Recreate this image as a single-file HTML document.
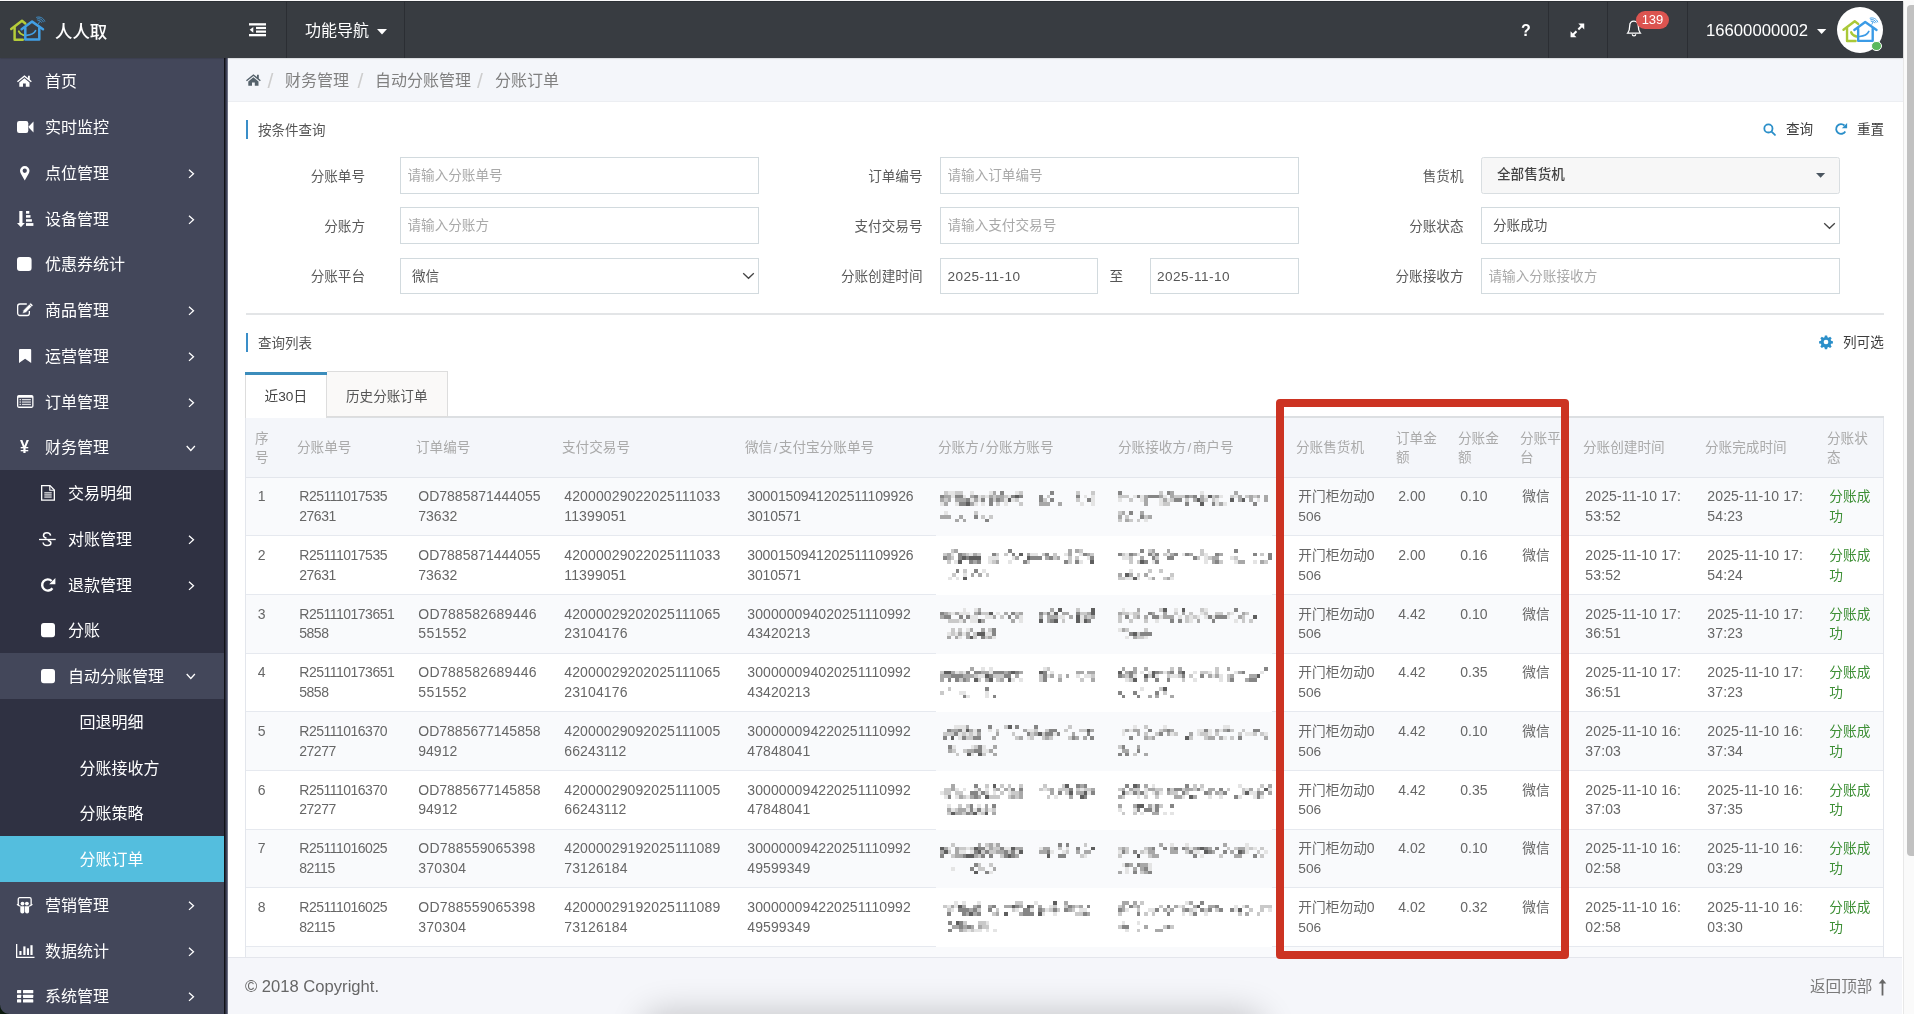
<!DOCTYPE html>
<html lang="zh-CN">
<head>
<meta charset="utf-8">
<title>分账订单</title>
<style>
*{box-sizing:border-box;margin:0;padding:0}
html,body{width:1914px;height:1014px;overflow:hidden;background:#fff}
body{position:relative;font-family:"Liberation Sans","Noto Sans CJK SC",sans-serif;font-size:13.5px;color:#555;-webkit-font-smoothing:antialiased;filter:opacity(1)}
.abs{position:absolute}
svg{display:block;position:absolute;overflow:visible}
/* top line */
#topline{left:0;top:0;width:1914px;height:1px;background:#fbfbfb;z-index:4}
/* header */
#hdr{left:0;top:1px;width:1902.500px;height:57px;background:#383c41;color:#fff;z-index:3;box-shadow:inset 0 1px 0 #2c3035,0 0.500px 1.500px rgba(0,0,0,.28)}
#hdr .sep{position:absolute;top:0;width:1px;height:57px;background:#2b2e33}
#hdr .t{position:absolute;white-space:nowrap;color:#fff}
/* sidebar */
#side{left:0;top:58px;width:228px;height:956px;background:#43475a}
#side .edge{position:absolute;left:224px;top:0;width:4px;height:956px;background:linear-gradient(90deg,#111217 0 1px,#2b2d3b 1px 2px,#3e4257 2px 3px,#6b6f82 3px 4px)}
#side .it{position:absolute;left:0;width:224px;height:45.75px;line-height:45.75px;color:#fff;font-size:16px;white-space:nowrap}
#side .it span{position:absolute;left:45px;top:1.300px}
#side .it.s2 span{left:68px}
#side .it.s3 span{left:79.500px}
#side .dark{background:#2f3142}
#side .act{background:#54bede}
/* main */
#crumb{left:228px;top:58px;width:1674.500px;height:44px;background:#f4f6fa;border-bottom:1px solid #eceef2;z-index:2}
#crumb .t{position:absolute;top:1.300px;line-height:44px;font-size:16px;color:#808080;white-space:nowrap}
#crumb .sl{position:absolute;top:.5px;line-height:44px;font-size:21px;color:#cdcdcd}
#foot{left:228px;top:957px;width:1674px;height:57px;background:#f5f6fa;border-top:1px solid #e4e6ec;overflow:hidden}
/* scrollbar */
#sbar{left:1903px;top:0;width:11px;height:1014px;background:#fafafa;border-left:1px solid #e8e8e8}
#sthumb{left:1907px;top:4.500px;width:7px;height:851px;background:#c1c1c1;border-radius:4px 0 0 4px}
</style>
</head>
<body>
<div id="topline" class="abs"></div>

<!-- HEADER -->
<div id="hdr" class="abs">
  <svg style="left:4px;top:10.100px" width="50" height="38" viewBox="0 0 50 38" fill="none" stroke-linecap="round" stroke-linejoin="round">
    <g stroke="#b5cc3a" stroke-width="2.500"><path d="M7.200 18 18 9.800 21.300 12.400"/><path d="M10.600 16.500V28.800H18.800"/><path stroke-width="1.900" d="M14.800 20.300c.8 2 2.400 3.200 4.600 3.900"/></g>
    <g stroke="#42a0e6" stroke-width="2.500"><path d="M17.600 18.200 28.100 10.600 39 18.200"/><path d="M21.300 17V28.600H35.300V17"/><path stroke-width="1.700" d="M22.600 24.300c4 -.2 7.500-1.600 9-4.600"/></g>
    <g stroke="#3f97d8" stroke-width=".9"><path d="M34.500 12.800 35.400 10.900"/><path d="M33.900 9.600c1.500-.4 3 .4 3.600 1.700"/><path d="M33.200 7.900c2.500-.8 5.100.5 6.100 2.900"/><path d="M32.600 6.300c3.400-1.100 6.900.7 8.200 3.900"/></g>
  </svg>
  <svg style="left:249px;top:22px" width="17" height="14" viewBox="0 0 17 14" fill="#fff"><rect x="0" y="0.200" width="17" height="2.300"/><rect x="7" y="3.900" width="10" height="2.200"/><rect x="7" y="7.500" width="10" height="2.200"/><rect x="0" y="11" width="17" height="2.300"/><path d="M4.300 3.900v5.800L0.700 6.800z"/></svg>
  <svg style="left:376.500px;top:27.800px" width="10" height="6" viewBox="0 0 10 6" fill="#fff"><path d="M0 0h10L5 5.400z"/></svg>
  <svg style="left:1570.400px;top:21.700px" width="14.800" height="14.800" viewBox="0 0 16 16" fill="#fff"><path d="M9 .6h6.400V7L13 4.600 9.800 7.800 8.200 6.200 11.400 3z"/><path d="M7 15.400H.6V9L3 11.400 6.200 8.200 7.800 9.800 4.600 13z"/></svg>
  <svg style="left:1626px;top:19px" width="16" height="18" viewBox="0 0 16 18" fill="none" stroke="#fff" stroke-width="1.300"><path d="M8 1.200c-2.700 0-4.300 2.200-4.300 4.900 0 3.500-.8 5.600-2 7h12.600c-1.200-1.400-2-3.500-2-7 0-2.700-1.600-4.900-4.300-4.900z"/><path d="M6.300 14.200a1.700 1.700 0 0 0 3.400 0"/></svg>
  <div class="abs" style="left:1636px;top:10px;width:33px;height:18.300px;border-radius:9.200px;background:#db5450;color:#fff;font-size:13px;line-height:18px;text-align:center;font-weight:normal">139</div>
  <svg style="left:1816.800px;top:28px" width="9.300" height="5.600" viewBox="0 0 10 6" fill="#fff"><path d="M0 0h10L5 5.400z"/></svg>
  <div class="abs" style="left:1837.300px;top:5.500px;width:46.200px;height:46.200px;border-radius:50%;background:#fff"></div>
  <svg style="left:1835.800px;top:9.600px" width="52" height="39.500" viewBox="0 0 50 38" fill="none" stroke-linecap="round" stroke-linejoin="round">
    <g stroke="#a9c838" stroke-width="2.300"><path d="M7.200 18 18 9.800 21.300 12.400"/><path d="M10.600 16.500V28.900H18.800"/><path d="M14.600 20.500c.8 2.200 2.600 3.400 5 4"/></g>
    <g stroke="#3b9be6" stroke-width="2.300"><path d="M17.600 18.200 28.100 10.600 39 18.200"/><path d="M21.300 17V28.700H35.300V17"/><path stroke-width="1.600" d="M22.600 24.500c4 -.2 7.500-1.600 9-4.800"/></g>
    <g stroke="#3b9be6" stroke-width=".9"><path d="M34.500 12.800 35.400 10.900"/><path d="M33.900 9.900c1.400-.4 2.700.3 3.300 1.500"/><path d="M33.300 8.400c2.200-.7 4.400.4 5.300 2.500"/><path d="M32.800 6.900c3-1 6.200.6 7.300 3.600"/></g>
  </svg>
  <div class="abs" style="left:1871.100px;top:39.600px;width:10.800px;height:10.800px;border-radius:50%;background:#5cb85c;border:1.800px solid #fff"></div>

  <div class="t" style="left:55px;top:19px;font-size:17.400px;line-height:24px;font-weight:500">人人取</div>
  <div class="sep" style="left:286px"></div>
  <div class="t" style="left:305px;top:18px;font-size:16px;line-height:24px">功能导航</div>
  <div class="sep" style="left:404px"></div>
  <div class="t" style="left:1521px;top:17.800px;font-size:16px;line-height:24px;font-weight:bold">?</div>
  <div class="sep" style="left:1548px"></div>
  <div class="sep" style="left:1607px"></div>
  <div class="sep" style="left:1687px"></div>
  <div class="t" style="left:1706px;top:17.700px;font-size:16.700px;line-height:24px">16600000002</div>
</div>

<!-- SIDEBAR -->
<div id="side" class="abs">
  <div class="it s1 " style="top:0.0px"><svg style="left:17.3px;top:17.2px" width="15" height="12" viewBox="0 0 15 12" fill="#fff"><path d="M7.400 .2 0 6.200.9 7.300 7.400 2l6.500 5.300.900-1.100-2-1.650V.8h-1.800v2.250z"/><path d="M7.400 3.300 2.300 7.500v4.200H6V8.600h2.800v3.100h3.700V7.500z"/></svg><span>首页</span></div>
  <div class="it s1 " style="top:45.75px"><svg style="left:16.7px;top:17.25px" width="16.5" height="12" viewBox="0 0 16.5 12" fill="#fff"><rect x="0" y="0" width="11.300" height="12" rx="2.200"/><path d="M11.900 5.200 16.500.6v10.800L11.900 6.800z"/></svg><span>实时监控</span></div>
  <div class="it s1 " style="top:91.5px"><svg style="left:20px;top:16.3px" width="9.5" height="14.4" viewBox="0 0 9.5 14.4" fill="#fff"><path fill-rule="evenodd" d="M4.750 0A4.750 4.750 0 0 0 0 4.750c0 1.100.400 2.100.900 3.100l3.850 6.550L8.600 7.850c.5-1 .900-2 .900-3.100A4.750 4.750 0 0 0 4.750 0zm0 6.900a2.150 2.150 0 1 1 0-4.300 2.150 2.150 0 0 1 0 4.300z"/></svg><span>点位管理</span><svg style="left:187.500px;top:19.300px" width="7" height="9.600" viewBox="0 0 7 9.600" fill="none" stroke="#fff" stroke-width="1.300"><path d="M1 .7 5.500 4.800 1 8.900"/></svg></div>
  <div class="it s1 " style="top:137.25px"><svg style="left:16.9px;top:15.75px" width="16.5" height="16.5" viewBox="0 0 16.5 16.5" fill="#fff"><rect x="2.300" y="0" width="3.200" height="12.300"/><path d="M0 12h7.800L3.900 16.300z"/><rect x="9" y="0" width="3.300" height="2.700"/><rect x="9" y="4.100" width="4.500" height="2.600"/><rect x="9" y="8.200" width="5.900" height="2.500"/><rect x="9" y="12.100" width="7.400" height="2.800"/></svg><span>设备管理</span><svg style="left:187.500px;top:19.300px" width="7" height="9.600" viewBox="0 0 7 9.600" fill="none" stroke="#fff" stroke-width="1.300"><path d="M1 .7 5.500 4.800 1 8.900"/></svg></div>
  <div class="it s1 " style="top:183.0px"><svg style="left:17.4px;top:16.4px" width="14.6" height="13.9" viewBox="0 0 14.6 13.9" fill="#fff"><rect x="0" y="0" width="14.600" height="13.900" rx="2.900"/></svg><span>优惠券统计</span></div>
  <div class="it s1 " style="top:228.75px"><svg style="left:16.7px;top:16px" width="16.5" height="13.5" viewBox="0 0 16.5 13.5" fill="#fff"><path fill="none" stroke="#fff" stroke-width="1.300" d="M12.350 8V10.300a2.200 2.200 0 0 1-2.200 2.200H2.850a2.200 2.200 0 0 1-2.200-2.200V3.200A2.200 2.200 0 0 1 2.850 1H9.800"/><path stroke="#43475a" stroke-width=".7" d="M6.300 7.200 13.700-.2l2.500 2.500-7.400 7.400-3.400 .900z"/><path stroke="#43475a" stroke-width=".6" fill="none" d="M12.300 1.200l2.500 2.500"/></svg><span>商品管理</span><svg style="left:187.500px;top:19.300px" width="7" height="9.600" viewBox="0 0 7 9.600" fill="none" stroke="#fff" stroke-width="1.300"><path d="M1 .7 5.500 4.800 1 8.900"/></svg></div>
  <div class="it s1 " style="top:274.5px"><svg style="left:18.9px;top:16.2px" width="12.2" height="14.1" viewBox="0 0 12.2 14.1" fill="#fff"><path d="M1 0h10.200a1 1 0 0 1 1 1v13.100L6.100 9.800 0 14.100V1a1 1 0 0 1 1-1z"/></svg><span>运营管理</span><svg style="left:187.500px;top:19.300px" width="7" height="9.600" viewBox="0 0 7 9.600" fill="none" stroke="#fff" stroke-width="1.300"><path d="M1 .7 5.500 4.800 1 8.900"/></svg></div>
  <div class="it s1 " style="top:320.25px"><svg style="left:16.7px;top:16.4px" width="16.5" height="12.9" viewBox="0 0 16.5 12.9" fill="#fff"><path fill-rule="evenodd" d="M1.800 0h12.900a1.800 1.800 0 0 1 1.800 1.800v9.300a1.800 1.800 0 0 1-1.800 1.800H1.800A1.800 1.800 0 0 1 0 11.100V1.800A1.800 1.800 0 0 1 1.800 0zM1.300 2.700v8.900h13.900V2.700z"/><rect x="2.600" y="4" width="1.200" height="1.300"/><rect x="2.600" y="6.400" width="1.200" height="1.300"/><rect x="2.600" y="8.800" width="1.200" height="1.300"/><rect x="4.900" y="4" width="9" height="1.300" opacity=".8"/><rect x="4.900" y="6.400" width="9" height="1.300" opacity=".8"/><rect x="4.900" y="8.800" width="9" height="1.300" opacity=".8"/></svg><span>订单管理</span><svg style="left:187.500px;top:19.300px" width="7" height="9.600" viewBox="0 0 7 9.600" fill="none" stroke="#fff" stroke-width="1.300"><path d="M1 .7 5.500 4.800 1 8.900"/></svg></div>
  <div class="it s1 " style="top:366.0px"><em style="position:absolute;left:20.100px;top:1.200px;font-style:normal;font-size:17.500px;font-weight:bold;transform:scaleX(.92);transform-origin:0 50%">¥</em><span>财务管理</span><svg style="left:186.300px;top:20.500px" width="9.600" height="7" viewBox="0 0 9.600 7" fill="none" stroke="#fff" stroke-width="1.300"><path d="M.7 1 4.800 5.500 8.900 1"/></svg></div>
  <div class="it s2 dark" style="top:411.75px"><svg style="left:40.9px;top:15.3px" width="14" height="15.7" viewBox="0 0 14 15.7" fill="#fff"><path fill="none" stroke="#fff" stroke-width="1.300" d="M.65.65H9l4.350 4.350v10.050H.65z"/><path fill="none" stroke="#fff" stroke-width="1.100" d="M8.800.8v4.400h4.400"/><rect x="3.300" y="7.300" width="7.400" height="1.100"/><rect x="3.300" y="9.400" width="7.400" height="1.100"/><rect x="3.300" y="11.500" width="7.400" height="1.100"/></svg><span>交易明细</span></div>
  <div class="it s2 dark" style="top:457.5px"><svg style="left:39.3px;top:16.6px" width="16.7" height="13.6" viewBox="0 0 16.7 13.6" fill="#fff"><rect x="0" y="6.850" width="16.700" height="1.300"/><path fill="none" stroke="#fff" stroke-width="1.500" d="M11.600 3.600C11.300 1.600 9.900.7 8 .7 6 .7 4.500 1.700 4.500 3.400c0 1.500 1.200 2.300 3 2.900M8.800 8.300c1.900.6 3.100 1.400 3.100 2.700 0 1.700-1.600 2.500-3.700 2.500-2.300 0-3.900-1.100-4.100-3"/></svg><span>对账管理</span><svg style="left:187.500px;top:19.300px" width="7" height="9.600" viewBox="0 0 7 9.600" fill="none" stroke="#fff" stroke-width="1.300"><path d="M1 .7 5.500 4.800 1 8.900"/></svg></div>
  <div class="it s2 dark" style="top:503.25px"><svg style="left:40.9px;top:16.5px" width="14.4" height="13.9" viewBox="0 0 14.4 13.9" fill="#fff"><path fill="none" stroke="#fff" stroke-width="2.400" d="M11.390 10.210A5.600 5.600 0 1 1 10.700 3"/><path d="M14.400 0v6.200H8.200z"/></svg><span>退款管理</span><svg style="left:187.500px;top:19.300px" width="7" height="9.600" viewBox="0 0 7 9.600" fill="none" stroke="#fff" stroke-width="1.300"><path d="M1 .7 5.500 4.800 1 8.900"/></svg></div>
  <div class="it s2 dark" style="top:549.0px"><svg style="left:40.9px;top:16.3px" width="14" height="14.2" viewBox="0 0 14 14.2" fill="#fff"><rect x="0" y="0" width="14" height="14.200" rx="2.900"/></svg><span>分账</span></div>
  <div class="it s2 " style="top:594.75px"><svg style="left:40.9px;top:16.3px" width="14" height="14.2" viewBox="0 0 14 14.2" fill="#fff"><rect x="0" y="0" width="14" height="14.200" rx="2.900"/></svg><span>自动分账管理</span><svg style="left:186.300px;top:20.500px" width="9.600" height="7" viewBox="0 0 9.600 7" fill="none" stroke="#fff" stroke-width="1.300"><path d="M.7 1 4.800 5.500 8.900 1"/></svg></div>
  <div class="it s3 dark" style="top:640.5px"><span>回退明细</span></div>
  <div class="it s3 dark" style="top:686.25px"><span>分账接收方</span></div>
  <div class="it s3 dark" style="top:732.0px"><span>分账策略</span></div>
  <div class="it s3 act" style="top:777.75px"><span>分账订单</span></div>
  <div class="it s1 " style="top:823.5px"><svg style="left:17.1px;top:15.2px" width="15.4" height="16.5" viewBox="0 0 15.4 16.5" fill="#fff"><path fill="none" stroke="#fff" stroke-width="1.300" d="M1.250 8V2.200a1.500 1.500 0 0 1 1.500-1.500h9.900a1.500 1.500 0 0 1 1.500 1.500V8"/><path fill="none" stroke="#fff" stroke-width="1.200" d="M0 7.300c1 .9 2.200 1.600 3.500 2M15.400 7.300c-1 .9-2.200 1.600-3.500 2"/><circle cx="5.500" cy="6.600" r="1.900"/><circle cx="9.900" cy="6.600" r="1.900"/><path d="M3.300 9.200h4.100v5.200a2.050 2.050 0 0 1-4.100 0zM8 9.200h4.100v5.200a2.050 2.050 0 0 1-4.100 0z"/></svg><span>营销管理</span><svg style="left:187.500px;top:19.300px" width="7" height="9.600" viewBox="0 0 7 9.600" fill="none" stroke="#fff" stroke-width="1.300"><path d="M1 .7 5.500 4.800 1 8.900"/></svg></div>
  <div class="it s1 " style="top:869.25px"><svg style="left:15.5px;top:16.75px" width="19" height="14" viewBox="0 0 19 14" fill="#fff"><path fill="none" stroke="#fff" stroke-width="1.300" d="M.65 0v13.350H18.500"/><rect x="3.400" y="7" width="2.100" height="4"/><rect x="7.300" y="2.400" width="2.200" height="8.600"/><rect x="10.900" y="4.300" width="2.100" height="6.700"/><rect x="14.400" y="1.200" width="2.200" height="9.800"/></svg><span>数据统计</span><svg style="left:187.500px;top:19.300px" width="7" height="9.600" viewBox="0 0 7 9.600" fill="none" stroke="#fff" stroke-width="1.300"><path d="M1 .7 5.500 4.800 1 8.900"/></svg></div>
  <div class="it s1 " style="top:915.0px"><svg style="left:16.8px;top:16.6px" width="16.3" height="12.6" viewBox="0 0 16.3 12.6" fill="#fff"><rect x="0" y="0" width="4.200" height="3.300" rx=".6"/><rect x="0" y="4.650" width="4.200" height="3.300" rx=".6"/><rect x="0" y="9.300" width="4.200" height="3.300" rx=".6"/><rect x="6" y="0" width="10.300" height="3.300" rx=".6"/><rect x="6" y="4.650" width="10.300" height="3.300" rx=".6"/><rect x="6" y="9.300" width="10.300" height="3.300" rx=".6"/></svg><span>系统管理</span><svg style="left:187.500px;top:19.300px" width="7" height="9.600" viewBox="0 0 7 9.600" fill="none" stroke="#fff" stroke-width="1.300"><path d="M1 .7 5.500 4.800 1 8.900"/></svg></div>
  <div class="edge"></div>
</div>

<!-- BREADCRUMB -->
<div id="crumb" class="abs">
  <svg style="left:18px;top:16px" width="15" height="12" viewBox="0 0 15 12" fill="#55626b"><path d="M7.400 .2 0 6.200.9 7.300 7.400 2l6.500 5.300.900-1.100-2-1.650V.8h-1.800v2.250z"/><path d="M7.400 3.300 2.300 7.500v4.200H6V8.600h2.800v3.100h3.700V7.500z"/></svg>
  <div class="sl" style="left:39.600px">/</div>
  <div class="t" style="left:57px">财务管理</div>
  <div class="sl" style="left:129.600px">/</div>
  <div class="t" style="left:147px">自动分账管理</div>
  <div class="sl" style="left:249.100px">/</div>
  <div class="t" style="left:267px">分账订单</div>
</div>

<!-- CONTENT -->
<div id="main" class="abs" style="left:228px;top:101px;width:1674px;height:856px;background:#fff;overflow:hidden">
<style>
.bar{position:absolute;left:17.600px;width:2.800px;height:18.500px;background:#3a8ec8}
.stitle{position:absolute;left:30px;font-size:13.500px;line-height:18px;color:#555;white-space:nowrap}
.lbl{position:absolute;width:150px;text-align:right;font-size:13.600px;line-height:37px;color:#5a5a5a;white-space:nowrap}
.inp{position:absolute;height:36.600px;border:1px solid #d2dade;background:#fff;font-size:13.600px;line-height:34px;padding-top:1.300px;color:#555;padding-left:6.500px;white-space:nowrap;overflow:hidden}
.inp.ph{color:#a9a9a9}
.inp.sel{padding-left:11px}
.lnk{position:absolute;font-size:13.600px;line-height:18px;color:#3c3c3c;white-space:nowrap}
</style>
<div class="bar" style="top:19px"></div><div class="stitle" style="top:20.500px">按条件查询</div>
<svg style="left:1534.500px;top:21.500px" width="13.300" height="13.300" viewBox="0 0 14 14" fill="none" stroke="#2b8fc9" stroke-width="1.900" stroke-linecap="round"><circle cx="5.700" cy="5.700" r="4.300"/><path d="M9 9l3.600 3.600"/></svg>
<div class="lnk" style="left:1558px;top:20.300px">查询</div>
<svg style="left:1605.500px;top:21px" width="14" height="14" viewBox="0 0 16 16" fill="none" stroke="#2b8fc9" stroke-width="2.100"><path d="M12.900 10.800A5.600 5.600 0 1 1 12 4"/><path fill="#2b8fc9" stroke="none" d="M15 1.200v6H9z"/></svg>
<div class="lnk" style="left:1629px;top:20.300px">重置</div>

<div class="lbl" style="left:-13px;top:56.500px">分账单号</div><div class="inp ph" style="left:172px;top:56px;width:359px">请输入分账单号</div>
<div class="lbl" style="left:-13px;top:106.700px">分账方</div><div class="inp ph" style="left:172px;top:106.200px;width:359px">请输入分账方</div>
<div class="lbl" style="left:-13px;top:157px">分账平台</div><div class="inp sel" style="left:172px;top:156.800px;width:359px">微信</div>
<svg style="left:514px;top:170.500px" width="13" height="8" viewBox="0 0 13 8" fill="none" stroke="#444" stroke-width="1.300"><path d="M1.200 1.200 6.500 6.300 11.800 1.200"/></svg>

<div class="lbl" style="left:544.500px;top:56.500px">订单编号</div><div class="inp ph" style="left:712px;top:56px;width:359px">请输入订单编号</div>
<div class="lbl" style="left:544.500px;top:106.700px">支付交易号</div><div class="inp ph" style="left:712px;top:106.200px;width:359px">请输入支付交易号</div>
<div class="lbl" style="left:544.500px;top:157px">分账创建时间</div>
<div class="inp" style="left:712px;top:156.800px;width:157.500px;letter-spacing:.45px">2025-11-10</div>
<div class="lnk" style="left:881.500px;top:166.800px;color:#555">至</div>
<div class="inp" style="left:921.500px;top:156.800px;width:149px;letter-spacing:.45px">2025-11-10</div>

<div class="lbl" style="left:1085.500px;top:56.500px">售货机</div>
<div class="inp" style="left:1253px;top:56px;width:359px;background:#f7f7f7;border-color:#d9dee1;border-radius:2.500px;padding-left:15px;color:#444;font-weight:500;line-height:32px">全部售货机</div>
<svg style="left:1587.600px;top:71.500px" width="9.200" height="5.500" viewBox="0 0 10 6" fill="#4b5660"><path d="M0 0h10L5 5.200z"/></svg>
<div class="lbl" style="left:1085.500px;top:106.700px">分账状态</div><div class="inp sel" style="left:1253px;top:106.200px;width:359px">分账成功</div>
<svg style="left:1594.500px;top:120.500px" width="13" height="8" viewBox="0 0 13 8" fill="none" stroke="#444" stroke-width="1.300"><path d="M1.200 1.200 6.500 6.300 11.800 1.200"/></svg>
<div class="lbl" style="left:1085.500px;top:157px">分账接收方</div><div class="inp ph" style="left:1253px;top:156.800px;width:359px">请输入分账接收方</div>

<div class="abs" style="left:18px;top:212.400px;width:1638px;height:1.200px;background:#e3e5e7"></div>

<div class="bar" style="top:232px"></div><div class="stitle" style="top:233.500px">查询列表</div>
<svg style="left:1590.500px;top:233.500px" width="14" height="14" viewBox="0 0 16 16" fill="#2b8fc9"><path fill-rule="evenodd" d="M6.700.5h2.600l.4 2.100 1.200.5 1.800-1.200 1.800 1.800-1.200 1.800.5 1.200 2.100.4v2.600l-2.100.4-.5 1.200 1.200 1.800-1.800 1.800-1.800-1.200-1.200.5-.4 2.100H6.700l-.4-2.100-1.200-.5-1.800 1.200-1.800-1.800 1.200-1.800-.5-1.200-2.100-.4V7.100l2.100-.4.500-1.200L1.500 3.700l1.800-1.800 1.800 1.200 1.200-.5zM8 5.300a2.700 2.700 0 1 0 0 5.400 2.700 2.700 0 0 0 0-5.400z"/></svg>
<div class="lnk" style="left:1615px;top:232.500px">列可选</div>

<!-- tabs -->
<div class="abs" style="left:18px;top:315px;width:1638px;height:2.300px;background:#dcdfe2"></div>
<div class="abs" style="left:99px;top:270.300px;width:121px;height:46px;background:#faf9f8;border:1px solid #ddd;border-left:none;border-bottom:1px solid #ddd"></div>
<div class="abs" style="left:17px;top:271px;width:82px;height:46.300px;background:#fff;border-left:1px solid #ddd;border-right:1px solid #ddd"></div>
<div class="abs" style="left:17px;top:270.900px;width:82px;height:2.900px;background:#3c8dbc"></div>
<div class="abs" style="left:36.500px;top:285.800px;font-size:13.700px;line-height:20px;color:#444;white-space:nowrap">近30日</div>
<div class="abs" style="left:118px;top:285.800px;font-size:13.600px;line-height:20px;color:#555;white-space:nowrap">历史分账订单</div>

<style>
#tb{position:absolute;left:17px;top:317.30px;width:1639px;height:560px;border-left:1px solid #e3e6ec;border-right:1px solid #e3e6ec;overflow:hidden}
#tb .r{position:absolute;left:0;width:1637px;height:58.70px;border-bottom:1px solid #e6e9ef}
#tb .r.o{background:#f9fafc}
#tb i{font-style:normal;padding:0 1.400px}
#tb .r.h{background:#f4f6fa;border-bottom:1px solid #e3e6ec}
#tb .c{position:absolute;top:0;padding:9.600px 0 0 12.300px;font-size:14px;line-height:19.700px;color:#666;white-space:nowrap;letter-spacing:.02px}
#tb .c.z{font-size:13.700px}
#tb .c.g{color:#3d8f35;font-size:13.700px}
#tb .h .c{color:#aaa;font-size:13.600px;height:59.30px;display:flex;align-items:center;padding-top:0;padding-left:10px;line-height:19.400px}
</style>
<div id="tb">
<div class="r h" style="top:0;height:59.3px"><div class="c" style="left:-1.0px"><div>序<br>号</div></div><div class="c" style="left:41.0px"><div>分账单号</div></div><div class="c" style="left:160.0px"><div>订单编号</div></div><div class="c" style="left:306.0px"><div>支付交易号</div></div><div class="c" style="left:489.0px"><div>微信<i>/</i>支付宝分账单号</div></div><div class="c" style="left:682.0px"><div>分账方<i>/</i>分账方账号</div></div><div class="c" style="left:862.0px"><div>分账接收方<i>/</i>商户号</div></div><div class="c" style="left:1040.0px"><div>分账售货机</div></div><div class="c" style="left:1140.0px"><div>订单金<br>额</div></div><div class="c" style="left:1202.0px"><div>分账金<br>额</div></div><div class="c" style="left:1264.0px"><div>分账平<br>台</div></div><div class="c" style="left:1327.0px"><div>分账创建时间</div></div><div class="c" style="left:1449.0px"><div>分账完成时间</div></div><div class="c" style="left:1571.0px"><div>分账状<br>态</div></div></div>
<div class="r o" style="top:59.30px"><div class="c " style="left:-0.6px">1</div><div class="c " style="left:41.0px;letter-spacing:-0.5px">R25111017535<br>27631</div><div class="c " style="left:160.0px;letter-spacing:0px">OD7885871444055<br>73632</div><div class="c " style="left:306.0px;letter-spacing:0.12px">42000029022025111033<br>11399051</div><div class="c " style="left:489.0px;letter-spacing:-0.14px">3000150941202511109926<br>3010571</div><svg style="left:690.0px;top:0" width="336" height="58.7" viewBox="0 0 336 58.7" shape-rendering="crispEdges"><rect width="336" height="58.7" fill="#f9fafc"/><path fill="#5e5e5e" d="M30.25 24.05h3.75v3.75h-3.75zM71.5 20.30h3.75v3.75h-3.75zM79 16.55h3.75v3.75h-3.75zM260.75 20.30h3.75v3.75h-3.75zM264.5 24.05h3.75v3.75h-3.75zM272 16.55h3.75v3.75h-3.75zM294.5 20.30h3.75v3.75h-3.75zM305.75 20.30h3.75v3.75h-3.75z"/><path fill="#858585" d="M4 16.55h3.75v3.75h-3.75zM19 16.55h3.75v3.75h-3.75zM22.75 16.55h3.75v3.75h-3.75zM22.75 24.05h3.75v3.75h-3.75zM26.5 24.05h3.75v3.75h-3.75zM30.25 20.30h3.75v3.75h-3.75zM37.75 16.55h3.75v3.75h-3.75zM45.25 20.30h3.75v3.75h-3.75zM52.75 20.30h3.75v3.75h-3.75zM52.75 24.05h3.75v3.75h-3.75zM60.25 20.30h3.75v3.75h-3.75zM64 12.80h3.75v3.75h-3.75zM75.25 16.55h3.75v3.75h-3.75zM82.75 16.55h3.75v3.75h-3.75zM103 16.55h3.75v3.75h-3.75zM103 20.30h3.75v3.75h-3.75zM114.25 12.80h3.75v3.75h-3.75zM114.25 20.30h3.75v3.75h-3.75zM140 16.55h3.75v3.75h-3.75zM151.25 20.30h3.75v3.75h-3.75zM37.75 36.95h3.75v3.75h-3.75zM49 40.70h3.75v3.75h-3.75zM182 12.80h3.75v3.75h-3.75zM200.75 16.55h3.75v3.75h-3.75zM212 16.55h3.75v3.75h-3.75zM215.75 16.55h3.75v3.75h-3.75zM219.5 16.55h3.75v3.75h-3.75zM230.75 12.80h3.75v3.75h-3.75zM238.25 20.30h3.75v3.75h-3.75zM242 20.30h3.75v3.75h-3.75zM249.5 16.55h3.75v3.75h-3.75zM249.5 24.05h3.75v3.75h-3.75zM257 16.55h3.75v3.75h-3.75zM275.75 24.05h3.75v3.75h-3.75zM317 24.05h3.75v3.75h-3.75zM193.25 33.20h3.75v3.75h-3.75zM204.5 36.95h3.75v3.75h-3.75z"/><path fill="#a8a8a8" d="M4 20.30h3.75v3.75h-3.75zM7.75 16.55h3.75v3.75h-3.75zM7.75 24.05h3.75v3.75h-3.75zM11.5 16.55h3.75v3.75h-3.75zM11.5 20.30h3.75v3.75h-3.75zM19 20.30h3.75v3.75h-3.75zM22.75 20.30h3.75v3.75h-3.75zM26.5 20.30h3.75v3.75h-3.75zM34 16.55h3.75v3.75h-3.75zM34 24.05h3.75v3.75h-3.75zM37.75 20.30h3.75v3.75h-3.75zM52.75 16.55h3.75v3.75h-3.75zM56.5 12.80h3.75v3.75h-3.75zM60.25 16.55h3.75v3.75h-3.75zM64 16.55h3.75v3.75h-3.75zM64 20.30h3.75v3.75h-3.75zM103 24.05h3.75v3.75h-3.75zM106.75 24.05h3.75v3.75h-3.75zM110.5 24.05h3.75v3.75h-3.75zM122 24.05h3.75v3.75h-3.75zM4 36.95h3.75v3.75h-3.75zM7.75 36.95h3.75v3.75h-3.75zM11.5 36.95h3.75v3.75h-3.75zM19 40.70h3.75v3.75h-3.75zM22.75 36.95h3.75v3.75h-3.75zM26.5 40.70h3.75v3.75h-3.75zM208.25 16.55h3.75v3.75h-3.75zM208.25 20.30h3.75v3.75h-3.75zM208.25 24.05h3.75v3.75h-3.75zM223.25 16.55h3.75v3.75h-3.75zM227 20.30h3.75v3.75h-3.75zM234.5 12.80h3.75v3.75h-3.75zM234.5 16.55h3.75v3.75h-3.75zM253.25 16.55h3.75v3.75h-3.75zM257 20.30h3.75v3.75h-3.75zM264.5 16.55h3.75v3.75h-3.75zM264.5 20.30h3.75v3.75h-3.75zM279.5 16.55h3.75v3.75h-3.75zM283.25 24.05h3.75v3.75h-3.75zM298.25 12.80h3.75v3.75h-3.75zM302 16.55h3.75v3.75h-3.75zM302 20.30h3.75v3.75h-3.75zM313.25 16.55h3.75v3.75h-3.75zM313.25 20.30h3.75v3.75h-3.75zM320.75 16.55h3.75v3.75h-3.75zM328.25 16.55h3.75v3.75h-3.75zM328.25 20.30h3.75v3.75h-3.75zM182 36.95h3.75v3.75h-3.75zM185.75 33.20h3.75v3.75h-3.75zM189.5 40.70h3.75v3.75h-3.75zM204.5 33.20h3.75v3.75h-3.75zM212 36.95h3.75v3.75h-3.75z"/><path fill="#c9c9c9" d="M7.75 12.80h3.75v3.75h-3.75zM7.75 20.30h3.75v3.75h-3.75zM19 12.80h3.75v3.75h-3.75zM22.75 12.80h3.75v3.75h-3.75zM45.25 16.55h3.75v3.75h-3.75zM56.5 16.55h3.75v3.75h-3.75zM56.5 20.30h3.75v3.75h-3.75zM60.25 24.05h3.75v3.75h-3.75zM67.75 16.55h3.75v3.75h-3.75zM79 20.30h3.75v3.75h-3.75zM82.75 12.80h3.75v3.75h-3.75zM82.75 24.05h3.75v3.75h-3.75zM106.75 20.30h3.75v3.75h-3.75zM110.5 16.55h3.75v3.75h-3.75zM140 12.80h3.75v3.75h-3.75zM140 20.30h3.75v3.75h-3.75zM155 12.80h3.75v3.75h-3.75zM37.75 33.20h3.75v3.75h-3.75zM45.25 36.95h3.75v3.75h-3.75zM52.75 36.95h3.75v3.75h-3.75zM182 16.55h3.75v3.75h-3.75zM185.75 16.55h3.75v3.75h-3.75zM189.5 16.55h3.75v3.75h-3.75zM193.25 20.30h3.75v3.75h-3.75zM223.25 12.80h3.75v3.75h-3.75zM227 24.05h3.75v3.75h-3.75zM230.75 24.05h3.75v3.75h-3.75zM234.5 20.30h3.75v3.75h-3.75zM238.25 16.55h3.75v3.75h-3.75zM242 16.55h3.75v3.75h-3.75zM245.75 16.55h3.75v3.75h-3.75zM249.5 20.30h3.75v3.75h-3.75zM268.25 20.30h3.75v3.75h-3.75zM275.75 16.55h3.75v3.75h-3.75zM275.75 20.30h3.75v3.75h-3.75zM294.5 16.55h3.75v3.75h-3.75zM309.5 16.55h3.75v3.75h-3.75zM317 16.55h3.75v3.75h-3.75zM182 33.20h3.75v3.75h-3.75zM182 40.70h3.75v3.75h-3.75zM189.5 36.95h3.75v3.75h-3.75zM193.25 40.70h3.75v3.75h-3.75zM200.75 40.70h3.75v3.75h-3.75zM208.25 36.95h3.75v3.75h-3.75z"/><path fill="#e4e4e4" d="M4 24.05h3.75v3.75h-3.75zM11.5 12.80h3.75v3.75h-3.75zM15.25 12.80h3.75v3.75h-3.75zM15.25 16.55h3.75v3.75h-3.75zM19 24.05h3.75v3.75h-3.75zM26.5 16.55h3.75v3.75h-3.75zM34 12.80h3.75v3.75h-3.75zM34 20.30h3.75v3.75h-3.75zM37.75 24.05h3.75v3.75h-3.75zM41.5 16.55h3.75v3.75h-3.75zM41.5 20.30h3.75v3.75h-3.75zM45.25 24.05h3.75v3.75h-3.75zM49 16.55h3.75v3.75h-3.75zM52.75 12.80h3.75v3.75h-3.75zM67.75 20.30h3.75v3.75h-3.75zM67.75 24.05h3.75v3.75h-3.75zM71.5 16.55h3.75v3.75h-3.75zM75.25 20.30h3.75v3.75h-3.75zM79 12.80h3.75v3.75h-3.75zM143.75 24.05h3.75v3.75h-3.75zM147.5 16.55h3.75v3.75h-3.75zM155 16.55h3.75v3.75h-3.75zM155 20.30h3.75v3.75h-3.75zM155 24.05h3.75v3.75h-3.75zM7.75 33.20h3.75v3.75h-3.75zM182 20.30h3.75v3.75h-3.75zM197 16.55h3.75v3.75h-3.75zM204.5 16.55h3.75v3.75h-3.75zM204.5 20.30h3.75v3.75h-3.75zM223.25 20.30h3.75v3.75h-3.75zM223.25 24.05h3.75v3.75h-3.75zM227 16.55h3.75v3.75h-3.75zM230.75 20.30h3.75v3.75h-3.75zM264.5 12.80h3.75v3.75h-3.75zM268.25 16.55h3.75v3.75h-3.75zM279.5 20.30h3.75v3.75h-3.75zM279.5 24.05h3.75v3.75h-3.75zM283.25 16.55h3.75v3.75h-3.75zM287 24.05h3.75v3.75h-3.75zM298.25 16.55h3.75v3.75h-3.75zM320.75 20.30h3.75v3.75h-3.75zM208.25 40.70h3.75v3.75h-3.75z"/></svg><div class="c z" style="left:1040.0px">开门柜勿动<span style="font-size:14px">0</span><br>506</div><div class="c " style="left:1140.0px">2.00</div><div class="c " style="left:1202.0px">0.10</div><div class="c z" style="left:1264.0px">微信</div><div class="c " style="left:1327.0px;letter-spacing:0.13px">2025-11-10 17:<br>53:52</div><div class="c " style="left:1449.0px;letter-spacing:0.13px">2025-11-10 17:<br>54:23</div><div class="c g" style="left:1571.0px">分账成<br>功</div></div>
<div class="r " style="top:118.00px"><div class="c " style="left:-0.6px">2</div><div class="c " style="left:41.0px;letter-spacing:-0.5px">R25111017535<br>27631</div><div class="c " style="left:160.0px;letter-spacing:0px">OD7885871444055<br>73632</div><div class="c " style="left:306.0px;letter-spacing:0.12px">42000029022025111033<br>11399051</div><div class="c " style="left:489.0px;letter-spacing:-0.14px">3000150941202511109926<br>3010571</div><svg style="left:690.0px;top:0" width="336" height="58.7" viewBox="0 0 336 58.7" shape-rendering="crispEdges"><rect width="336" height="58.7" fill="#fff"/><path fill="#5e5e5e" d="M22 24.05h3.75v3.75h-3.75zM25.75 20.30h3.75v3.75h-3.75zM33.25 20.30h3.75v3.75h-3.75zM37 20.30h3.75v3.75h-3.75zM40.75 20.30h3.75v3.75h-3.75zM83 16.55h3.75v3.75h-3.75zM90.5 20.30h3.75v3.75h-3.75zM154.25 24.05h3.75v3.75h-3.75zM27 40.70h3.75v3.75h-3.75zM204.5 24.05h3.75v3.75h-3.75zM189.5 36.95h3.75v3.75h-3.75zM197 40.70h3.75v3.75h-3.75z"/><path fill="#858585" d="M7 20.30h3.75v3.75h-3.75zM22 16.55h3.75v3.75h-3.75zM22 20.30h3.75v3.75h-3.75zM29.5 20.30h3.75v3.75h-3.75zM33.25 24.05h3.75v3.75h-3.75zM40.75 24.05h3.75v3.75h-3.75zM55.75 16.55h3.75v3.75h-3.75zM71.75 12.80h3.75v3.75h-3.75zM75.5 16.55h3.75v3.75h-3.75zM86.75 24.05h3.75v3.75h-3.75zM94.25 20.30h3.75v3.75h-3.75zM98 20.30h3.75v3.75h-3.75zM101.75 20.30h3.75v3.75h-3.75zM109.25 16.55h3.75v3.75h-3.75zM113 20.30h3.75v3.75h-3.75zM128 24.05h3.75v3.75h-3.75zM139.25 24.05h3.75v3.75h-3.75zM146.75 16.55h3.75v3.75h-3.75zM154.25 20.30h3.75v3.75h-3.75zM19.5 33.20h3.75v3.75h-3.75zM38.25 33.20h3.75v3.75h-3.75zM182 16.55h3.75v3.75h-3.75zM193.25 16.55h3.75v3.75h-3.75zM204.5 12.80h3.75v3.75h-3.75zM208.25 24.05h3.75v3.75h-3.75zM212 16.55h3.75v3.75h-3.75zM215.75 20.30h3.75v3.75h-3.75zM219.5 16.55h3.75v3.75h-3.75zM219.5 24.05h3.75v3.75h-3.75zM230.75 20.30h3.75v3.75h-3.75zM234.5 20.30h3.75v3.75h-3.75zM238.25 16.55h3.75v3.75h-3.75zM249.5 16.55h3.75v3.75h-3.75zM257 20.30h3.75v3.75h-3.75zM279.5 16.55h3.75v3.75h-3.75zM279.5 24.05h3.75v3.75h-3.75zM298.25 12.80h3.75v3.75h-3.75zM317 16.55h3.75v3.75h-3.75zM332 16.55h3.75v3.75h-3.75zM332 20.30h3.75v3.75h-3.75z"/><path fill="#a8a8a8" d="M10.75 16.55h3.75v3.75h-3.75zM10.75 20.30h3.75v3.75h-3.75zM18.25 12.80h3.75v3.75h-3.75zM25.75 16.55h3.75v3.75h-3.75zM37 16.55h3.75v3.75h-3.75zM37 24.05h3.75v3.75h-3.75zM59.5 24.05h3.75v3.75h-3.75zM79.25 20.30h3.75v3.75h-3.75zM90.5 16.55h3.75v3.75h-3.75zM109.25 20.30h3.75v3.75h-3.75zM120.5 20.30h3.75v3.75h-3.75zM131.75 12.80h3.75v3.75h-3.75zM131.75 16.55h3.75v3.75h-3.75zM139.25 12.80h3.75v3.75h-3.75zM150.5 16.55h3.75v3.75h-3.75zM34.5 36.95h3.75v3.75h-3.75zM42 36.95h3.75v3.75h-3.75zM197 16.55h3.75v3.75h-3.75zM204.5 20.30h3.75v3.75h-3.75zM215.75 12.80h3.75v3.75h-3.75zM230.75 12.80h3.75v3.75h-3.75zM234.5 16.55h3.75v3.75h-3.75zM253.25 16.55h3.75v3.75h-3.75zM275.75 20.30h3.75v3.75h-3.75zM275.75 24.05h3.75v3.75h-3.75zM279.5 20.30h3.75v3.75h-3.75zM283.25 16.55h3.75v3.75h-3.75zM302 24.05h3.75v3.75h-3.75zM305.75 24.05h3.75v3.75h-3.75zM324.5 24.05h3.75v3.75h-3.75zM182 36.95h3.75v3.75h-3.75zM193.25 36.95h3.75v3.75h-3.75zM208.25 36.95h3.75v3.75h-3.75zM215.75 40.70h3.75v3.75h-3.75zM230.75 40.70h3.75v3.75h-3.75z"/><path fill="#c9c9c9" d="M7 16.55h3.75v3.75h-3.75zM10.75 24.05h3.75v3.75h-3.75zM14.5 12.80h3.75v3.75h-3.75zM14.5 20.30h3.75v3.75h-3.75zM29.5 16.55h3.75v3.75h-3.75zM40.75 16.55h3.75v3.75h-3.75zM55.75 24.05h3.75v3.75h-3.75zM59.5 16.55h3.75v3.75h-3.75zM68 16.55h3.75v3.75h-3.75zM90.5 24.05h3.75v3.75h-3.75zM105.5 16.55h3.75v3.75h-3.75zM116.75 16.55h3.75v3.75h-3.75zM116.75 20.30h3.75v3.75h-3.75zM131.75 20.30h3.75v3.75h-3.75zM131.75 24.05h3.75v3.75h-3.75zM139.25 20.30h3.75v3.75h-3.75zM143 12.80h3.75v3.75h-3.75zM154.25 16.55h3.75v3.75h-3.75zM15.75 36.95h3.75v3.75h-3.75zM27 33.20h3.75v3.75h-3.75zM49.5 36.95h3.75v3.75h-3.75zM185.75 16.55h3.75v3.75h-3.75zM193.25 20.30h3.75v3.75h-3.75zM193.25 24.05h3.75v3.75h-3.75zM200.75 24.05h3.75v3.75h-3.75zM212 12.80h3.75v3.75h-3.75zM215.75 16.55h3.75v3.75h-3.75zM219.5 20.30h3.75v3.75h-3.75zM227 16.55h3.75v3.75h-3.75zM260.75 20.30h3.75v3.75h-3.75zM264.5 12.80h3.75v3.75h-3.75zM264.5 16.55h3.75v3.75h-3.75zM272 20.30h3.75v3.75h-3.75zM283.25 24.05h3.75v3.75h-3.75zM298.25 20.30h3.75v3.75h-3.75zM324.5 16.55h3.75v3.75h-3.75zM328.25 24.05h3.75v3.75h-3.75zM182 40.70h3.75v3.75h-3.75zM185.75 40.70h3.75v3.75h-3.75zM200.75 36.95h3.75v3.75h-3.75zM212 33.20h3.75v3.75h-3.75zM223.25 33.20h3.75v3.75h-3.75zM227 40.70h3.75v3.75h-3.75zM234.5 36.95h3.75v3.75h-3.75z"/><path fill="#e4e4e4" d="M14.5 16.55h3.75v3.75h-3.75zM18.25 24.05h3.75v3.75h-3.75zM33.25 16.55h3.75v3.75h-3.75zM52 20.30h3.75v3.75h-3.75zM52 24.05h3.75v3.75h-3.75zM55.75 20.30h3.75v3.75h-3.75zM59.5 20.30h3.75v3.75h-3.75zM71.75 24.05h3.75v3.75h-3.75zM75.5 20.30h3.75v3.75h-3.75zM94.25 16.55h3.75v3.75h-3.75zM98 16.55h3.75v3.75h-3.75zM128 16.55h3.75v3.75h-3.75zM143 16.55h3.75v3.75h-3.75zM143 24.05h3.75v3.75h-3.75zM150.5 20.30h3.75v3.75h-3.75zM12 40.70h3.75v3.75h-3.75zM19.5 40.70h3.75v3.75h-3.75zM27 36.95h3.75v3.75h-3.75zM45.75 33.20h3.75v3.75h-3.75zM185.75 20.30h3.75v3.75h-3.75zM189.5 16.55h3.75v3.75h-3.75zM189.5 20.30h3.75v3.75h-3.75zM200.75 16.55h3.75v3.75h-3.75zM215.75 24.05h3.75v3.75h-3.75zM230.75 16.55h3.75v3.75h-3.75zM245.75 16.55h3.75v3.75h-3.75zM268.25 16.55h3.75v3.75h-3.75zM268.25 20.30h3.75v3.75h-3.75zM268.25 24.05h3.75v3.75h-3.75zM294.5 20.30h3.75v3.75h-3.75zM298.25 24.05h3.75v3.75h-3.75zM317 24.05h3.75v3.75h-3.75zM189.5 40.70h3.75v3.75h-3.75zM193.25 33.20h3.75v3.75h-3.75zM193.25 40.70h3.75v3.75h-3.75zM200.75 40.70h3.75v3.75h-3.75zM212 40.70h3.75v3.75h-3.75zM234.5 40.70h3.75v3.75h-3.75z"/></svg><div class="c z" style="left:1040.0px">开门柜勿动<span style="font-size:14px">0</span><br>506</div><div class="c " style="left:1140.0px">2.00</div><div class="c " style="left:1202.0px">0.16</div><div class="c z" style="left:1264.0px">微信</div><div class="c " style="left:1327.0px;letter-spacing:0.13px">2025-11-10 17:<br>53:52</div><div class="c " style="left:1449.0px;letter-spacing:0.13px">2025-11-10 17:<br>54:24</div><div class="c g" style="left:1571.0px">分账成<br>功</div></div>
<div class="r o" style="top:176.70px"><div class="c " style="left:-0.6px">3</div><div class="c " style="left:41.0px;letter-spacing:-0.5px">R251110173651<br>5858</div><div class="c " style="left:160.0px;letter-spacing:0.3px">OD788582689446<br>551552</div><div class="c " style="left:306.0px;letter-spacing:0.12px">42000029202025111065<br>23104176</div><div class="c " style="left:489.0px;letter-spacing:0.1px">300000094020251110992<br>43420213</div><svg style="left:690.0px;top:0" width="336" height="58.7" viewBox="0 0 336 58.7" shape-rendering="crispEdges"><rect width="336" height="58.7" fill="#f9fafc"/><path fill="#5e5e5e" d="M41.5 24.05h3.75v3.75h-3.75zM52.75 16.55h3.75v3.75h-3.75zM103 24.05h3.75v3.75h-3.75zM118 16.55h3.75v3.75h-3.75zM118 24.05h3.75v3.75h-3.75zM121.75 12.80h3.75v3.75h-3.75zM140 20.30h3.75v3.75h-3.75zM140 24.05h3.75v3.75h-3.75zM147.5 24.05h3.75v3.75h-3.75zM155 12.80h3.75v3.75h-3.75zM155 16.55h3.75v3.75h-3.75zM33.5 40.70h3.75v3.75h-3.75zM41 36.95h3.75v3.75h-3.75zM44.75 36.95h3.75v3.75h-3.75zM227 12.80h3.75v3.75h-3.75zM245.75 12.80h3.75v3.75h-3.75zM317 20.30h3.75v3.75h-3.75zM197 36.95h3.75v3.75h-3.75z"/><path fill="#858585" d="M4 16.55h3.75v3.75h-3.75zM7.75 20.30h3.75v3.75h-3.75zM11.5 20.30h3.75v3.75h-3.75zM22.75 20.30h3.75v3.75h-3.75zM30.25 20.30h3.75v3.75h-3.75zM41.5 16.55h3.75v3.75h-3.75zM71.5 20.30h3.75v3.75h-3.75zM75.25 16.55h3.75v3.75h-3.75zM103 16.55h3.75v3.75h-3.75zM110.5 16.55h3.75v3.75h-3.75zM114.25 24.05h3.75v3.75h-3.75zM140 16.55h3.75v3.75h-3.75zM151.25 24.05h3.75v3.75h-3.75zM44.75 40.70h3.75v3.75h-3.75zM56 33.20h3.75v3.75h-3.75zM56 36.95h3.75v3.75h-3.75zM189.5 20.30h3.75v3.75h-3.75zM212 16.55h3.75v3.75h-3.75zM215.75 20.30h3.75v3.75h-3.75zM219.5 20.30h3.75v3.75h-3.75zM234.5 24.05h3.75v3.75h-3.75zM242 24.05h3.75v3.75h-3.75zM272 20.30h3.75v3.75h-3.75zM275.75 24.05h3.75v3.75h-3.75zM279.5 20.30h3.75v3.75h-3.75zM283.25 20.30h3.75v3.75h-3.75zM287 20.30h3.75v3.75h-3.75zM298.25 12.80h3.75v3.75h-3.75zM193.25 36.95h3.75v3.75h-3.75zM204.5 36.95h3.75v3.75h-3.75zM208.25 36.95h3.75v3.75h-3.75zM212 36.95h3.75v3.75h-3.75z"/><path fill="#a8a8a8" d="M4 20.30h3.75v3.75h-3.75zM7.75 16.55h3.75v3.75h-3.75zM19 16.55h3.75v3.75h-3.75zM26.5 24.05h3.75v3.75h-3.75zM37.75 16.55h3.75v3.75h-3.75zM41.5 12.80h3.75v3.75h-3.75zM45.25 24.05h3.75v3.75h-3.75zM56.5 20.30h3.75v3.75h-3.75zM67.75 16.55h3.75v3.75h-3.75zM75.25 24.05h3.75v3.75h-3.75zM79 20.30h3.75v3.75h-3.75zM82.75 16.55h3.75v3.75h-3.75zM103 20.30h3.75v3.75h-3.75zM110.5 20.30h3.75v3.75h-3.75zM110.5 24.05h3.75v3.75h-3.75zM114.25 12.80h3.75v3.75h-3.75zM114.25 20.30h3.75v3.75h-3.75zM118 20.30h3.75v3.75h-3.75zM125.5 16.55h3.75v3.75h-3.75zM129.25 16.55h3.75v3.75h-3.75zM133 20.30h3.75v3.75h-3.75zM147.5 20.30h3.75v3.75h-3.75zM151.25 16.55h3.75v3.75h-3.75zM155 20.30h3.75v3.75h-3.75zM11 40.70h3.75v3.75h-3.75zM18.5 40.70h3.75v3.75h-3.75zM22.25 36.95h3.75v3.75h-3.75zM29.75 36.95h3.75v3.75h-3.75zM29.75 40.70h3.75v3.75h-3.75zM33.5 33.20h3.75v3.75h-3.75zM44.75 33.20h3.75v3.75h-3.75zM52.25 40.70h3.75v3.75h-3.75zM182 16.55h3.75v3.75h-3.75zM200.75 12.80h3.75v3.75h-3.75zM200.75 20.30h3.75v3.75h-3.75zM208.25 20.30h3.75v3.75h-3.75zM215.75 16.55h3.75v3.75h-3.75zM227 16.55h3.75v3.75h-3.75zM227 20.30h3.75v3.75h-3.75zM230.75 20.30h3.75v3.75h-3.75zM234.5 20.30h3.75v3.75h-3.75zM245.75 16.55h3.75v3.75h-3.75zM260.75 24.05h3.75v3.75h-3.75zM302 20.30h3.75v3.75h-3.75zM305.75 16.55h3.75v3.75h-3.75zM185.75 33.20h3.75v3.75h-3.75zM197 40.70h3.75v3.75h-3.75z"/><path fill="#c9c9c9" d="M11.5 16.55h3.75v3.75h-3.75zM11.5 24.05h3.75v3.75h-3.75zM15.25 24.05h3.75v3.75h-3.75zM19 24.05h3.75v3.75h-3.75zM45.25 16.55h3.75v3.75h-3.75zM49 16.55h3.75v3.75h-3.75zM64 20.30h3.75v3.75h-3.75zM79 16.55h3.75v3.75h-3.75zM106.75 16.55h3.75v3.75h-3.75zM125.5 24.05h3.75v3.75h-3.75zM140 12.80h3.75v3.75h-3.75zM143.75 16.55h3.75v3.75h-3.75zM147.5 16.55h3.75v3.75h-3.75zM151.25 20.30h3.75v3.75h-3.75zM14.75 33.20h3.75v3.75h-3.75zM14.75 36.95h3.75v3.75h-3.75zM22.25 33.20h3.75v3.75h-3.75zM37.25 36.95h3.75v3.75h-3.75zM37.25 40.70h3.75v3.75h-3.75zM48.5 40.70h3.75v3.75h-3.75zM52.25 33.20h3.75v3.75h-3.75zM182 20.30h3.75v3.75h-3.75zM182 24.05h3.75v3.75h-3.75zM185.75 16.55h3.75v3.75h-3.75zM189.5 16.55h3.75v3.75h-3.75zM193.25 24.05h3.75v3.75h-3.75zM197 16.55h3.75v3.75h-3.75zM197 20.30h3.75v3.75h-3.75zM200.75 16.55h3.75v3.75h-3.75zM208.25 24.05h3.75v3.75h-3.75zM223.25 12.80h3.75v3.75h-3.75zM238.25 16.55h3.75v3.75h-3.75zM249.5 20.30h3.75v3.75h-3.75zM249.5 24.05h3.75v3.75h-3.75zM253.25 16.55h3.75v3.75h-3.75zM257 20.30h3.75v3.75h-3.75zM264.5 12.80h3.75v3.75h-3.75zM268.25 16.55h3.75v3.75h-3.75zM279.5 16.55h3.75v3.75h-3.75zM283.25 16.55h3.75v3.75h-3.75zM290.75 16.55h3.75v3.75h-3.75zM305.75 20.30h3.75v3.75h-3.75zM305.75 24.05h3.75v3.75h-3.75zM309.5 16.55h3.75v3.75h-3.75zM313.25 24.05h3.75v3.75h-3.75zM189.5 33.20h3.75v3.75h-3.75zM200.75 36.95h3.75v3.75h-3.75zM200.75 40.70h3.75v3.75h-3.75zM204.5 40.70h3.75v3.75h-3.75zM208.25 33.20h3.75v3.75h-3.75z"/><path fill="#e4e4e4" d="M15.25 16.55h3.75v3.75h-3.75zM22.75 16.55h3.75v3.75h-3.75zM22.75 24.05h3.75v3.75h-3.75zM26.5 12.80h3.75v3.75h-3.75zM26.5 16.55h3.75v3.75h-3.75zM30.25 16.55h3.75v3.75h-3.75zM34 20.30h3.75v3.75h-3.75zM34 24.05h3.75v3.75h-3.75zM37.75 12.80h3.75v3.75h-3.75zM37.75 20.30h3.75v3.75h-3.75zM37.75 24.05h3.75v3.75h-3.75zM49 20.30h3.75v3.75h-3.75zM52.75 20.30h3.75v3.75h-3.75zM60.25 16.55h3.75v3.75h-3.75zM82.75 20.30h3.75v3.75h-3.75zM82.75 24.05h3.75v3.75h-3.75zM114.25 16.55h3.75v3.75h-3.75zM121.75 20.30h3.75v3.75h-3.75zM125.5 20.30h3.75v3.75h-3.75zM143.75 20.30h3.75v3.75h-3.75zM143.75 24.05h3.75v3.75h-3.75zM11 36.95h3.75v3.75h-3.75zM18.5 36.95h3.75v3.75h-3.75zM22.25 40.70h3.75v3.75h-3.75zM26 36.95h3.75v3.75h-3.75zM29.75 33.20h3.75v3.75h-3.75zM48.5 36.95h3.75v3.75h-3.75zM52.25 36.95h3.75v3.75h-3.75zM56 40.70h3.75v3.75h-3.75zM185.75 12.80h3.75v3.75h-3.75zM193.25 16.55h3.75v3.75h-3.75zM219.5 24.05h3.75v3.75h-3.75zM223.25 20.30h3.75v3.75h-3.75zM238.25 12.80h3.75v3.75h-3.75zM242 20.30h3.75v3.75h-3.75zM253.25 20.30h3.75v3.75h-3.75zM253.25 24.05h3.75v3.75h-3.75zM260.75 20.30h3.75v3.75h-3.75zM264.5 16.55h3.75v3.75h-3.75zM268.25 12.80h3.75v3.75h-3.75zM268.25 20.30h3.75v3.75h-3.75zM275.75 20.30h3.75v3.75h-3.75zM290.75 20.30h3.75v3.75h-3.75zM294.5 16.55h3.75v3.75h-3.75zM298.25 24.05h3.75v3.75h-3.75zM182 33.20h3.75v3.75h-3.75zM189.5 40.70h3.75v3.75h-3.75zM208.25 40.70h3.75v3.75h-3.75z"/></svg><div class="c z" style="left:1040.0px">开门柜勿动<span style="font-size:14px">0</span><br>506</div><div class="c " style="left:1140.0px">4.42</div><div class="c " style="left:1202.0px">0.10</div><div class="c z" style="left:1264.0px">微信</div><div class="c " style="left:1327.0px;letter-spacing:0.13px">2025-11-10 17:<br>36:51</div><div class="c " style="left:1449.0px;letter-spacing:0.13px">2025-11-10 17:<br>37:23</div><div class="c g" style="left:1571.0px">分账成<br>功</div></div>
<div class="r " style="top:235.40px"><div class="c " style="left:-0.6px">4</div><div class="c " style="left:41.0px;letter-spacing:-0.5px">R251110173651<br>5858</div><div class="c " style="left:160.0px;letter-spacing:0.3px">OD788582689446<br>551552</div><div class="c " style="left:306.0px;letter-spacing:0.12px">42000029202025111065<br>23104176</div><div class="c " style="left:489.0px;letter-spacing:0.1px">300000094020251110992<br>43420213</div><svg style="left:690.0px;top:0" width="336" height="58.7" viewBox="0 0 336 58.7" shape-rendering="crispEdges"><rect width="336" height="58.7" fill="#fff"/><path fill="#5e5e5e" d="M7.75 16.55h3.75v3.75h-3.75zM11.5 16.55h3.75v3.75h-3.75zM37.75 24.05h3.75v3.75h-3.75zM49 20.30h3.75v3.75h-3.75zM52.75 24.05h3.75v3.75h-3.75zM71.5 24.05h3.75v3.75h-3.75zM75.25 16.55h3.75v3.75h-3.75zM103 16.55h3.75v3.75h-3.75zM182 16.55h3.75v3.75h-3.75zM197 24.05h3.75v3.75h-3.75zM208.25 20.30h3.75v3.75h-3.75zM215.75 16.55h3.75v3.75h-3.75zM215.75 20.30h3.75v3.75h-3.75zM245.75 16.55h3.75v3.75h-3.75zM320.75 20.30h3.75v3.75h-3.75zM227 33.20h3.75v3.75h-3.75z"/><path fill="#858585" d="M11.5 24.05h3.75v3.75h-3.75zM15.25 20.30h3.75v3.75h-3.75zM19 20.30h3.75v3.75h-3.75zM19 24.05h3.75v3.75h-3.75zM22.75 20.30h3.75v3.75h-3.75zM26.5 24.05h3.75v3.75h-3.75zM30.25 16.55h3.75v3.75h-3.75zM37.75 16.55h3.75v3.75h-3.75zM41.5 16.55h3.75v3.75h-3.75zM52.75 20.30h3.75v3.75h-3.75zM56.5 16.55h3.75v3.75h-3.75zM60.25 16.55h3.75v3.75h-3.75zM64 16.55h3.75v3.75h-3.75zM67.75 20.30h3.75v3.75h-3.75zM71.5 16.55h3.75v3.75h-3.75zM71.5 20.30h3.75v3.75h-3.75zM79 16.55h3.75v3.75h-3.75zM106.75 16.55h3.75v3.75h-3.75zM106.75 20.30h3.75v3.75h-3.75zM106.75 24.05h3.75v3.75h-3.75zM26.5 40.70h3.75v3.75h-3.75zM49 33.20h3.75v3.75h-3.75zM56.5 40.70h3.75v3.75h-3.75zM182 20.30h3.75v3.75h-3.75zM193.25 16.55h3.75v3.75h-3.75zM193.25 20.30h3.75v3.75h-3.75zM219.5 16.55h3.75v3.75h-3.75zM219.5 24.05h3.75v3.75h-3.75zM230.75 24.05h3.75v3.75h-3.75zM234.5 16.55h3.75v3.75h-3.75zM242 16.55h3.75v3.75h-3.75zM245.75 20.30h3.75v3.75h-3.75zM264.5 20.30h3.75v3.75h-3.75zM294.5 24.05h3.75v3.75h-3.75zM305.75 16.55h3.75v3.75h-3.75zM313.25 24.05h3.75v3.75h-3.75zM317 24.05h3.75v3.75h-3.75zM328.25 12.80h3.75v3.75h-3.75zM182 36.95h3.75v3.75h-3.75zM185.75 40.70h3.75v3.75h-3.75zM197 36.95h3.75v3.75h-3.75zM200.75 40.70h3.75v3.75h-3.75zM219.5 36.95h3.75v3.75h-3.75z"/><path fill="#a8a8a8" d="M4 20.30h3.75v3.75h-3.75zM4 24.05h3.75v3.75h-3.75zM7.75 20.30h3.75v3.75h-3.75zM11.5 20.30h3.75v3.75h-3.75zM15.25 16.55h3.75v3.75h-3.75zM26.5 20.30h3.75v3.75h-3.75zM30.25 20.30h3.75v3.75h-3.75zM30.25 24.05h3.75v3.75h-3.75zM34 12.80h3.75v3.75h-3.75zM34 20.30h3.75v3.75h-3.75zM45.25 16.55h3.75v3.75h-3.75zM49 16.55h3.75v3.75h-3.75zM49 24.05h3.75v3.75h-3.75zM64 24.05h3.75v3.75h-3.75zM67.75 16.55h3.75v3.75h-3.75zM79 20.30h3.75v3.75h-3.75zM82.75 16.55h3.75v3.75h-3.75zM114.25 20.30h3.75v3.75h-3.75zM122 24.05h3.75v3.75h-3.75zM129.5 20.30h3.75v3.75h-3.75zM140 16.55h3.75v3.75h-3.75zM143.75 16.55h3.75v3.75h-3.75zM151.25 16.55h3.75v3.75h-3.75zM155 16.55h3.75v3.75h-3.75zM155 24.05h3.75v3.75h-3.75zM185.75 12.80h3.75v3.75h-3.75zM185.75 20.30h3.75v3.75h-3.75zM189.5 16.55h3.75v3.75h-3.75zM197 12.80h3.75v3.75h-3.75zM197 16.55h3.75v3.75h-3.75zM208.25 12.80h3.75v3.75h-3.75zM208.25 24.05h3.75v3.75h-3.75zM223.25 16.55h3.75v3.75h-3.75zM230.75 16.55h3.75v3.75h-3.75zM242 12.80h3.75v3.75h-3.75zM272 20.30h3.75v3.75h-3.75zM279.5 20.30h3.75v3.75h-3.75zM290.75 12.80h3.75v3.75h-3.75zM294.5 20.30h3.75v3.75h-3.75zM302 16.55h3.75v3.75h-3.75zM309.5 24.05h3.75v3.75h-3.75zM313.25 20.30h3.75v3.75h-3.75zM317 20.30h3.75v3.75h-3.75zM212 40.70h3.75v3.75h-3.75zM219.5 40.70h3.75v3.75h-3.75zM234.5 40.70h3.75v3.75h-3.75z"/><path fill="#c9c9c9" d="M4 16.55h3.75v3.75h-3.75zM22.75 16.55h3.75v3.75h-3.75zM22.75 24.05h3.75v3.75h-3.75zM37.75 20.30h3.75v3.75h-3.75zM41.5 24.05h3.75v3.75h-3.75zM56.5 20.30h3.75v3.75h-3.75zM60.25 20.30h3.75v3.75h-3.75zM60.25 24.05h3.75v3.75h-3.75zM64 20.30h3.75v3.75h-3.75zM103 20.30h3.75v3.75h-3.75zM103 24.05h3.75v3.75h-3.75zM110.5 12.80h3.75v3.75h-3.75zM122 20.30h3.75v3.75h-3.75zM143.75 24.05h3.75v3.75h-3.75zM155 20.30h3.75v3.75h-3.75zM4 36.95h3.75v3.75h-3.75zM11.5 33.20h3.75v3.75h-3.75zM189.5 20.30h3.75v3.75h-3.75zM193.25 24.05h3.75v3.75h-3.75zM212 20.30h3.75v3.75h-3.75zM230.75 20.30h3.75v3.75h-3.75zM234.5 12.80h3.75v3.75h-3.75zM242 20.30h3.75v3.75h-3.75zM245.75 24.05h3.75v3.75h-3.75zM253.25 20.30h3.75v3.75h-3.75zM264.5 16.55h3.75v3.75h-3.75zM268.25 16.55h3.75v3.75h-3.75zM279.5 12.80h3.75v3.75h-3.75zM279.5 16.55h3.75v3.75h-3.75zM290.75 20.30h3.75v3.75h-3.75zM290.75 24.05h3.75v3.75h-3.75zM223.25 33.20h3.75v3.75h-3.75zM227 36.95h3.75v3.75h-3.75z"/><path fill="#e4e4e4" d="M19 16.55h3.75v3.75h-3.75zM26.5 16.55h3.75v3.75h-3.75zM41.5 20.30h3.75v3.75h-3.75zM45.25 12.80h3.75v3.75h-3.75zM45.25 20.30h3.75v3.75h-3.75zM52.75 12.80h3.75v3.75h-3.75zM52.75 16.55h3.75v3.75h-3.75zM75.25 24.05h3.75v3.75h-3.75zM82.75 24.05h3.75v3.75h-3.75zM106.75 12.80h3.75v3.75h-3.75zM110.5 20.30h3.75v3.75h-3.75zM114.25 16.55h3.75v3.75h-3.75zM140 20.30h3.75v3.75h-3.75zM147.5 20.30h3.75v3.75h-3.75zM151.25 20.30h3.75v3.75h-3.75zM22.75 36.95h3.75v3.75h-3.75zM26.5 36.95h3.75v3.75h-3.75zM30.25 40.70h3.75v3.75h-3.75zM49 36.95h3.75v3.75h-3.75zM49 40.70h3.75v3.75h-3.75zM189.5 24.05h3.75v3.75h-3.75zM197 20.30h3.75v3.75h-3.75zM204.5 16.55h3.75v3.75h-3.75zM212 16.55h3.75v3.75h-3.75zM219.5 20.30h3.75v3.75h-3.75zM227 16.55h3.75v3.75h-3.75zM234.5 20.30h3.75v3.75h-3.75zM238.25 20.30h3.75v3.75h-3.75zM257 16.55h3.75v3.75h-3.75zM257 24.05h3.75v3.75h-3.75zM272 16.55h3.75v3.75h-3.75zM275.75 20.30h3.75v3.75h-3.75zM283.25 20.30h3.75v3.75h-3.75zM283.25 24.05h3.75v3.75h-3.75zM298.25 16.55h3.75v3.75h-3.75zM324.5 16.55h3.75v3.75h-3.75zM204.5 33.20h3.75v3.75h-3.75z"/></svg><div class="c z" style="left:1040.0px">开门柜勿动<span style="font-size:14px">0</span><br>506</div><div class="c " style="left:1140.0px">4.42</div><div class="c " style="left:1202.0px">0.35</div><div class="c z" style="left:1264.0px">微信</div><div class="c " style="left:1327.0px;letter-spacing:0.13px">2025-11-10 17:<br>36:51</div><div class="c " style="left:1449.0px;letter-spacing:0.13px">2025-11-10 17:<br>37:23</div><div class="c g" style="left:1571.0px">分账成<br>功</div></div>
<div class="r o" style="top:294.10px"><div class="c " style="left:-0.6px">5</div><div class="c " style="left:41.0px;letter-spacing:-0.5px">R25111016370<br>27277</div><div class="c " style="left:160.0px;letter-spacing:0px">OD7885677145858<br>94912</div><div class="c " style="left:306.0px;letter-spacing:0.12px">42000029092025111005<br>66243112</div><div class="c " style="left:489.0px;letter-spacing:0.1px">300000094220251110992<br>47848041</div><svg style="left:690.0px;top:0" width="336" height="58.7" viewBox="0 0 336 58.7" shape-rendering="crispEdges"><rect width="336" height="58.7" fill="#f9fafc"/><path fill="#5e5e5e" d="M14.5 24.05h3.75v3.75h-3.75zM29.5 16.55h3.75v3.75h-3.75zM71.75 12.80h3.75v3.75h-3.75zM101.75 20.30h3.75v3.75h-3.75zM150.5 16.55h3.75v3.75h-3.75zM30.75 40.70h3.75v3.75h-3.75zM42 40.70h3.75v3.75h-3.75zM249.5 24.05h3.75v3.75h-3.75z"/><path fill="#858585" d="M7 24.05h3.75v3.75h-3.75zM10.75 16.55h3.75v3.75h-3.75zM18.25 20.30h3.75v3.75h-3.75zM22 16.55h3.75v3.75h-3.75zM25.75 24.05h3.75v3.75h-3.75zM37 24.05h3.75v3.75h-3.75zM40.75 16.55h3.75v3.75h-3.75zM40.75 24.05h3.75v3.75h-3.75zM52 12.80h3.75v3.75h-3.75zM79.25 12.80h3.75v3.75h-3.75zM90.5 20.30h3.75v3.75h-3.75zM98 12.80h3.75v3.75h-3.75zM109.25 20.30h3.75v3.75h-3.75zM113 16.55h3.75v3.75h-3.75zM113 20.30h3.75v3.75h-3.75zM116.75 16.55h3.75v3.75h-3.75zM120.5 20.30h3.75v3.75h-3.75zM135.5 24.05h3.75v3.75h-3.75zM150.5 20.30h3.75v3.75h-3.75zM154.25 24.05h3.75v3.75h-3.75zM12 33.20h3.75v3.75h-3.75zM38.25 36.95h3.75v3.75h-3.75zM42 33.20h3.75v3.75h-3.75zM42 36.95h3.75v3.75h-3.75zM193.25 24.05h3.75v3.75h-3.75zM212 16.55h3.75v3.75h-3.75zM223.25 20.30h3.75v3.75h-3.75zM230.75 16.55h3.75v3.75h-3.75zM268.25 16.55h3.75v3.75h-3.75zM290.75 16.55h3.75v3.75h-3.75zM302 24.05h3.75v3.75h-3.75zM317 16.55h3.75v3.75h-3.75zM320.75 16.55h3.75v3.75h-3.75zM182 40.70h3.75v3.75h-3.75zM185.75 33.20h3.75v3.75h-3.75zM189.5 40.70h3.75v3.75h-3.75zM200.75 36.95h3.75v3.75h-3.75z"/><path fill="#a8a8a8" d="M14.5 16.55h3.75v3.75h-3.75zM18.25 16.55h3.75v3.75h-3.75zM29.5 12.80h3.75v3.75h-3.75zM33.25 16.55h3.75v3.75h-3.75zM40.75 20.30h3.75v3.75h-3.75zM55.75 24.05h3.75v3.75h-3.75zM59.5 20.30h3.75v3.75h-3.75zM83 24.05h3.75v3.75h-3.75zM86.75 16.55h3.75v3.75h-3.75zM98 20.30h3.75v3.75h-3.75zM109.25 24.05h3.75v3.75h-3.75zM135.5 20.30h3.75v3.75h-3.75zM139.25 24.05h3.75v3.75h-3.75zM146.75 24.05h3.75v3.75h-3.75zM154.25 16.55h3.75v3.75h-3.75zM12 36.95h3.75v3.75h-3.75zM30.75 36.95h3.75v3.75h-3.75zM34.5 36.95h3.75v3.75h-3.75zM53.25 36.95h3.75v3.75h-3.75zM57 33.20h3.75v3.75h-3.75zM57 40.70h3.75v3.75h-3.75zM189.5 16.55h3.75v3.75h-3.75zM197 16.55h3.75v3.75h-3.75zM200.75 16.55h3.75v3.75h-3.75zM200.75 20.30h3.75v3.75h-3.75zM208.25 24.05h3.75v3.75h-3.75zM215.75 24.05h3.75v3.75h-3.75zM227 16.55h3.75v3.75h-3.75zM230.75 20.30h3.75v3.75h-3.75zM234.5 16.55h3.75v3.75h-3.75zM253.25 20.30h3.75v3.75h-3.75zM272 24.05h3.75v3.75h-3.75zM275.75 24.05h3.75v3.75h-3.75zM279.5 16.55h3.75v3.75h-3.75zM283.25 24.05h3.75v3.75h-3.75zM287 16.55h3.75v3.75h-3.75zM328.25 24.05h3.75v3.75h-3.75zM185.75 36.95h3.75v3.75h-3.75zM189.5 36.95h3.75v3.75h-3.75zM200.75 33.20h3.75v3.75h-3.75zM208.25 40.70h3.75v3.75h-3.75z"/><path fill="#c9c9c9" d="M7 20.30h3.75v3.75h-3.75zM10.75 20.30h3.75v3.75h-3.75zM14.5 20.30h3.75v3.75h-3.75zM25.75 20.30h3.75v3.75h-3.75zM29.5 24.05h3.75v3.75h-3.75zM33.25 20.30h3.75v3.75h-3.75zM33.25 24.05h3.75v3.75h-3.75zM59.5 16.55h3.75v3.75h-3.75zM68 12.80h3.75v3.75h-3.75zM75.5 20.30h3.75v3.75h-3.75zM79.25 24.05h3.75v3.75h-3.75zM94.25 20.30h3.75v3.75h-3.75zM94.25 24.05h3.75v3.75h-3.75zM98 16.55h3.75v3.75h-3.75zM105.5 20.30h3.75v3.75h-3.75zM105.5 24.05h3.75v3.75h-3.75zM109.25 16.55h3.75v3.75h-3.75zM113 24.05h3.75v3.75h-3.75zM128 16.55h3.75v3.75h-3.75zM131.75 12.80h3.75v3.75h-3.75zM131.75 24.05h3.75v3.75h-3.75zM143 16.55h3.75v3.75h-3.75zM146.75 16.55h3.75v3.75h-3.75zM15.75 36.95h3.75v3.75h-3.75zM19.5 40.70h3.75v3.75h-3.75zM27 36.95h3.75v3.75h-3.75zM38.25 33.20h3.75v3.75h-3.75zM45.75 40.70h3.75v3.75h-3.75zM208.25 12.80h3.75v3.75h-3.75zM208.25 20.30h3.75v3.75h-3.75zM212 24.05h3.75v3.75h-3.75zM219.5 20.30h3.75v3.75h-3.75zM223.25 16.55h3.75v3.75h-3.75zM238.25 20.30h3.75v3.75h-3.75zM253.25 24.05h3.75v3.75h-3.75zM264.5 20.30h3.75v3.75h-3.75zM268.25 20.30h3.75v3.75h-3.75zM268.25 24.05h3.75v3.75h-3.75zM279.5 20.30h3.75v3.75h-3.75zM294.5 16.55h3.75v3.75h-3.75zM294.5 24.05h3.75v3.75h-3.75zM302 20.30h3.75v3.75h-3.75zM305.75 16.55h3.75v3.75h-3.75zM317 20.30h3.75v3.75h-3.75zM324.5 20.30h3.75v3.75h-3.75zM182 33.20h3.75v3.75h-3.75zM197 40.70h3.75v3.75h-3.75z"/><path fill="#e4e4e4" d="M18.25 12.80h3.75v3.75h-3.75zM22 12.80h3.75v3.75h-3.75zM22 20.30h3.75v3.75h-3.75zM22 24.05h3.75v3.75h-3.75zM25.75 12.80h3.75v3.75h-3.75zM25.75 16.55h3.75v3.75h-3.75zM29.5 20.30h3.75v3.75h-3.75zM37 16.55h3.75v3.75h-3.75zM37 20.30h3.75v3.75h-3.75zM52 16.55h3.75v3.75h-3.75zM90.5 16.55h3.75v3.75h-3.75zM90.5 24.05h3.75v3.75h-3.75zM94.25 16.55h3.75v3.75h-3.75zM116.75 20.30h3.75v3.75h-3.75zM15.75 33.20h3.75v3.75h-3.75zM34.5 33.20h3.75v3.75h-3.75zM34.5 40.70h3.75v3.75h-3.75zM45.75 33.20h3.75v3.75h-3.75zM45.75 36.95h3.75v3.75h-3.75zM49.5 36.95h3.75v3.75h-3.75zM185.75 16.55h3.75v3.75h-3.75zM185.75 20.30h3.75v3.75h-3.75zM193.25 16.55h3.75v3.75h-3.75zM197 12.80h3.75v3.75h-3.75zM227 12.80h3.75v3.75h-3.75zM234.5 20.30h3.75v3.75h-3.75zM260.75 16.55h3.75v3.75h-3.75zM260.75 20.30h3.75v3.75h-3.75zM264.5 16.55h3.75v3.75h-3.75zM272 16.55h3.75v3.75h-3.75zM272 20.30h3.75v3.75h-3.75zM283.25 16.55h3.75v3.75h-3.75zM287 12.80h3.75v3.75h-3.75zM287 24.05h3.75v3.75h-3.75zM290.75 12.80h3.75v3.75h-3.75zM309.5 20.30h3.75v3.75h-3.75zM313.25 20.30h3.75v3.75h-3.75zM328.25 20.30h3.75v3.75h-3.75z"/></svg><div class="c z" style="left:1040.0px">开门柜勿动<span style="font-size:14px">0</span><br>506</div><div class="c " style="left:1140.0px">4.42</div><div class="c " style="left:1202.0px">0.10</div><div class="c z" style="left:1264.0px">微信</div><div class="c " style="left:1327.0px;letter-spacing:0.13px">2025-11-10 16:<br>37:03</div><div class="c " style="left:1449.0px;letter-spacing:0.13px">2025-11-10 16:<br>37:34</div><div class="c g" style="left:1571.0px">分账成<br>功</div></div>
<div class="r " style="top:352.80px"><div class="c " style="left:-0.6px">6</div><div class="c " style="left:41.0px;letter-spacing:-0.5px">R25111016370<br>27277</div><div class="c " style="left:160.0px;letter-spacing:0px">OD7885677145858<br>94912</div><div class="c " style="left:306.0px;letter-spacing:0.12px">42000029092025111005<br>66243112</div><div class="c " style="left:489.0px;letter-spacing:0.1px">300000094220251110992<br>47848041</div><svg style="left:690.0px;top:0" width="336" height="58.7" viewBox="0 0 336 58.7" shape-rendering="crispEdges"><rect width="336" height="58.7" fill="#fff"/><path fill="#5e5e5e" d="M49 24.05h3.75v3.75h-3.75zM56.5 12.80h3.75v3.75h-3.75zM129.25 12.80h3.75v3.75h-3.75zM133 20.30h3.75v3.75h-3.75zM143.75 24.05h3.75v3.75h-3.75zM147.5 20.30h3.75v3.75h-3.75zM14.75 40.70h3.75v3.75h-3.75zM37.25 40.70h3.75v3.75h-3.75zM48.5 40.70h3.75v3.75h-3.75zM185.75 20.30h3.75v3.75h-3.75zM197 12.80h3.75v3.75h-3.75zM253.25 24.05h3.75v3.75h-3.75zM309.5 20.30h3.75v3.75h-3.75zM328.25 16.55h3.75v3.75h-3.75zM200.75 33.20h3.75v3.75h-3.75zM204.5 33.20h3.75v3.75h-3.75z"/><path fill="#858585" d="M11.5 24.05h3.75v3.75h-3.75zM34 20.30h3.75v3.75h-3.75zM37.75 12.80h3.75v3.75h-3.75zM37.75 20.30h3.75v3.75h-3.75zM37.75 24.05h3.75v3.75h-3.75zM45.25 20.30h3.75v3.75h-3.75zM75.25 16.55h3.75v3.75h-3.75zM82.75 16.55h3.75v3.75h-3.75zM121.75 20.30h3.75v3.75h-3.75zM133 16.55h3.75v3.75h-3.75zM140 12.80h3.75v3.75h-3.75zM147.5 12.80h3.75v3.75h-3.75zM147.5 24.05h3.75v3.75h-3.75zM155 20.30h3.75v3.75h-3.75zM29.75 40.70h3.75v3.75h-3.75zM33.5 33.20h3.75v3.75h-3.75zM33.5 36.95h3.75v3.75h-3.75zM41 36.95h3.75v3.75h-3.75zM56 33.20h3.75v3.75h-3.75zM189.5 12.80h3.75v3.75h-3.75zM197 20.30h3.75v3.75h-3.75zM200.75 12.80h3.75v3.75h-3.75zM204.5 20.30h3.75v3.75h-3.75zM230.75 16.55h3.75v3.75h-3.75zM238.25 16.55h3.75v3.75h-3.75zM242 16.55h3.75v3.75h-3.75zM245.75 20.30h3.75v3.75h-3.75zM249.5 12.80h3.75v3.75h-3.75zM260.75 16.55h3.75v3.75h-3.75zM268.25 20.30h3.75v3.75h-3.75zM283.25 16.55h3.75v3.75h-3.75zM287 20.30h3.75v3.75h-3.75zM298.25 24.05h3.75v3.75h-3.75zM320.75 20.30h3.75v3.75h-3.75zM320.75 24.05h3.75v3.75h-3.75zM200.75 36.95h3.75v3.75h-3.75zM208.25 36.95h3.75v3.75h-3.75zM212 36.95h3.75v3.75h-3.75zM219.5 33.20h3.75v3.75h-3.75zM219.5 36.95h3.75v3.75h-3.75zM234.5 33.20h3.75v3.75h-3.75z"/><path fill="#a8a8a8" d="M15.25 12.80h3.75v3.75h-3.75zM15.25 16.55h3.75v3.75h-3.75zM22.75 24.05h3.75v3.75h-3.75zM34 24.05h3.75v3.75h-3.75zM41.5 16.55h3.75v3.75h-3.75zM41.5 24.05h3.75v3.75h-3.75zM60.25 16.55h3.75v3.75h-3.75zM67.75 16.55h3.75v3.75h-3.75zM75.25 24.05h3.75v3.75h-3.75zM82.75 20.30h3.75v3.75h-3.75zM82.75 24.05h3.75v3.75h-3.75zM114.25 16.55h3.75v3.75h-3.75zM114.25 20.30h3.75v3.75h-3.75zM133 24.05h3.75v3.75h-3.75zM140 20.30h3.75v3.75h-3.75zM143.75 12.80h3.75v3.75h-3.75zM143.75 20.30h3.75v3.75h-3.75zM155 16.55h3.75v3.75h-3.75zM11 36.95h3.75v3.75h-3.75zM18.5 40.70h3.75v3.75h-3.75zM22.25 36.95h3.75v3.75h-3.75zM22.25 40.70h3.75v3.75h-3.75zM26 36.95h3.75v3.75h-3.75zM33.5 40.70h3.75v3.75h-3.75zM48.5 33.20h3.75v3.75h-3.75zM48.5 36.95h3.75v3.75h-3.75zM56 40.70h3.75v3.75h-3.75zM182 24.05h3.75v3.75h-3.75zM185.75 16.55h3.75v3.75h-3.75zM193.25 16.55h3.75v3.75h-3.75zM208.25 12.80h3.75v3.75h-3.75zM212 16.55h3.75v3.75h-3.75zM215.75 16.55h3.75v3.75h-3.75zM219.5 20.30h3.75v3.75h-3.75zM230.75 20.30h3.75v3.75h-3.75zM238.25 24.05h3.75v3.75h-3.75zM242 24.05h3.75v3.75h-3.75zM249.5 16.55h3.75v3.75h-3.75zM253.25 16.55h3.75v3.75h-3.75zM257 24.05h3.75v3.75h-3.75zM272 16.55h3.75v3.75h-3.75zM272 20.30h3.75v3.75h-3.75zM275.75 16.55h3.75v3.75h-3.75zM279.5 20.30h3.75v3.75h-3.75zM313.25 16.55h3.75v3.75h-3.75zM324.5 20.30h3.75v3.75h-3.75zM332 12.80h3.75v3.75h-3.75zM332 20.30h3.75v3.75h-3.75zM182 33.20h3.75v3.75h-3.75zM197 33.20h3.75v3.75h-3.75zM212 33.20h3.75v3.75h-3.75zM215.75 40.70h3.75v3.75h-3.75zM219.5 40.70h3.75v3.75h-3.75z"/><path fill="#c9c9c9" d="M7.75 16.55h3.75v3.75h-3.75zM7.75 20.30h3.75v3.75h-3.75zM11.5 16.55h3.75v3.75h-3.75zM11.5 20.30h3.75v3.75h-3.75zM19 20.30h3.75v3.75h-3.75zM22.75 20.30h3.75v3.75h-3.75zM26.5 24.05h3.75v3.75h-3.75zM49 12.80h3.75v3.75h-3.75zM49 20.30h3.75v3.75h-3.75zM52.75 24.05h3.75v3.75h-3.75zM56.5 16.55h3.75v3.75h-3.75zM56.5 24.05h3.75v3.75h-3.75zM60.25 24.05h3.75v3.75h-3.75zM64 12.80h3.75v3.75h-3.75zM64 20.30h3.75v3.75h-3.75zM71.5 12.80h3.75v3.75h-3.75zM71.5 24.05h3.75v3.75h-3.75zM75.25 20.30h3.75v3.75h-3.75zM79 20.30h3.75v3.75h-3.75zM79 24.05h3.75v3.75h-3.75zM82.75 12.80h3.75v3.75h-3.75zM103 16.55h3.75v3.75h-3.75zM106.75 12.80h3.75v3.75h-3.75zM110.5 16.55h3.75v3.75h-3.75zM110.5 24.05h3.75v3.75h-3.75zM121.75 16.55h3.75v3.75h-3.75zM125.5 12.80h3.75v3.75h-3.75zM125.5 16.55h3.75v3.75h-3.75zM129.25 16.55h3.75v3.75h-3.75zM129.25 20.30h3.75v3.75h-3.75zM140 16.55h3.75v3.75h-3.75zM147.5 16.55h3.75v3.75h-3.75zM151.25 16.55h3.75v3.75h-3.75zM11 40.70h3.75v3.75h-3.75zM18.5 36.95h3.75v3.75h-3.75zM22.25 33.20h3.75v3.75h-3.75zM26 40.70h3.75v3.75h-3.75zM29.75 33.20h3.75v3.75h-3.75zM44.75 40.70h3.75v3.75h-3.75zM56 36.95h3.75v3.75h-3.75zM182 16.55h3.75v3.75h-3.75zM185.75 24.05h3.75v3.75h-3.75zM189.5 20.30h3.75v3.75h-3.75zM197 16.55h3.75v3.75h-3.75zM200.75 16.55h3.75v3.75h-3.75zM200.75 20.30h3.75v3.75h-3.75zM208.25 24.05h3.75v3.75h-3.75zM219.5 16.55h3.75v3.75h-3.75zM219.5 24.05h3.75v3.75h-3.75zM223.25 16.55h3.75v3.75h-3.75zM234.5 16.55h3.75v3.75h-3.75zM234.5 20.30h3.75v3.75h-3.75zM238.25 20.30h3.75v3.75h-3.75zM245.75 16.55h3.75v3.75h-3.75zM249.5 20.30h3.75v3.75h-3.75zM257 12.80h3.75v3.75h-3.75zM257 16.55h3.75v3.75h-3.75zM264.5 12.80h3.75v3.75h-3.75zM283.25 20.30h3.75v3.75h-3.75zM290.75 16.55h3.75v3.75h-3.75zM305.75 16.55h3.75v3.75h-3.75zM305.75 20.30h3.75v3.75h-3.75zM320.75 16.55h3.75v3.75h-3.75zM324.5 12.80h3.75v3.75h-3.75zM185.75 40.70h3.75v3.75h-3.75zM197 40.70h3.75v3.75h-3.75zM223.25 33.20h3.75v3.75h-3.75z"/><path fill="#e4e4e4" d="M4 20.30h3.75v3.75h-3.75zM7.75 24.05h3.75v3.75h-3.75zM19 16.55h3.75v3.75h-3.75zM19 24.05h3.75v3.75h-3.75zM26.5 16.55h3.75v3.75h-3.75zM30.25 24.05h3.75v3.75h-3.75zM37.75 16.55h3.75v3.75h-3.75zM41.5 20.30h3.75v3.75h-3.75zM49 16.55h3.75v3.75h-3.75zM56.5 20.30h3.75v3.75h-3.75zM71.5 16.55h3.75v3.75h-3.75zM71.5 20.30h3.75v3.75h-3.75zM106.75 16.55h3.75v3.75h-3.75zM118 24.05h3.75v3.75h-3.75zM143.75 16.55h3.75v3.75h-3.75zM151.25 20.30h3.75v3.75h-3.75zM11 33.20h3.75v3.75h-3.75zM14.75 36.95h3.75v3.75h-3.75zM29.75 36.95h3.75v3.75h-3.75zM37.25 36.95h3.75v3.75h-3.75zM41 33.20h3.75v3.75h-3.75zM41 40.70h3.75v3.75h-3.75zM44.75 36.95h3.75v3.75h-3.75zM52.25 36.95h3.75v3.75h-3.75zM193.25 20.30h3.75v3.75h-3.75zM200.75 24.05h3.75v3.75h-3.75zM208.25 16.55h3.75v3.75h-3.75zM208.25 20.30h3.75v3.75h-3.75zM215.75 12.80h3.75v3.75h-3.75zM215.75 20.30h3.75v3.75h-3.75zM223.25 20.30h3.75v3.75h-3.75zM245.75 24.05h3.75v3.75h-3.75zM264.5 16.55h3.75v3.75h-3.75zM272 24.05h3.75v3.75h-3.75zM283.25 24.05h3.75v3.75h-3.75zM302 12.80h3.75v3.75h-3.75zM302 24.05h3.75v3.75h-3.75zM309.5 16.55h3.75v3.75h-3.75zM313.25 20.30h3.75v3.75h-3.75zM317 20.30h3.75v3.75h-3.75zM317 24.05h3.75v3.75h-3.75zM324.5 24.05h3.75v3.75h-3.75zM332 16.55h3.75v3.75h-3.75zM182 36.95h3.75v3.75h-3.75zM197 36.95h3.75v3.75h-3.75zM204.5 40.70h3.75v3.75h-3.75zM215.75 33.20h3.75v3.75h-3.75zM215.75 36.95h3.75v3.75h-3.75zM227 40.70h3.75v3.75h-3.75zM234.5 40.70h3.75v3.75h-3.75z"/></svg><div class="c z" style="left:1040.0px">开门柜勿动<span style="font-size:14px">0</span><br>506</div><div class="c " style="left:1140.0px">4.42</div><div class="c " style="left:1202.0px">0.35</div><div class="c z" style="left:1264.0px">微信</div><div class="c " style="left:1327.0px;letter-spacing:0.13px">2025-11-10 16:<br>37:03</div><div class="c " style="left:1449.0px;letter-spacing:0.13px">2025-11-10 16:<br>37:35</div><div class="c g" style="left:1571.0px">分账成<br>功</div></div>
<div class="r o" style="top:411.50px"><div class="c " style="left:-0.6px">7</div><div class="c " style="left:41.0px;letter-spacing:-0.5px">R25111016025<br>82115</div><div class="c " style="left:160.0px;letter-spacing:0.2px">OD788559065398<br>370304</div><div class="c " style="left:306.0px;letter-spacing:0.12px">42000029192025111089<br>73126184</div><div class="c " style="left:489.0px;letter-spacing:0.1px">300000094220251110992<br>49599349</div><svg style="left:690.0px;top:0" width="336" height="58.7" viewBox="0 0 336 58.7" shape-rendering="crispEdges"><rect width="336" height="58.7" fill="#f9fafc"/><path fill="#5e5e5e" d="M4 16.55h3.75v3.75h-3.75zM7.75 20.30h3.75v3.75h-3.75zM30.25 24.05h3.75v3.75h-3.75zM34 24.05h3.75v3.75h-3.75zM37.75 16.55h3.75v3.75h-3.75zM41.5 20.30h3.75v3.75h-3.75zM71.5 24.05h3.75v3.75h-3.75zM75.25 16.55h3.75v3.75h-3.75zM82.75 20.30h3.75v3.75h-3.75zM110.5 24.05h3.75v3.75h-3.75zM155 16.55h3.75v3.75h-3.75zM37.75 40.70h3.75v3.75h-3.75zM200.75 24.05h3.75v3.75h-3.75zM264.5 16.55h3.75v3.75h-3.75zM268.25 20.30h3.75v3.75h-3.75zM302 20.30h3.75v3.75h-3.75z"/><path fill="#858585" d="M4 24.05h3.75v3.75h-3.75zM26.5 24.05h3.75v3.75h-3.75zM37.75 20.30h3.75v3.75h-3.75zM41.5 16.55h3.75v3.75h-3.75zM45.25 16.55h3.75v3.75h-3.75zM45.25 24.05h3.75v3.75h-3.75zM49 20.30h3.75v3.75h-3.75zM52.75 24.05h3.75v3.75h-3.75zM64 16.55h3.75v3.75h-3.75zM67.75 20.30h3.75v3.75h-3.75zM67.75 24.05h3.75v3.75h-3.75zM75.25 20.30h3.75v3.75h-3.75zM75.25 24.05h3.75v3.75h-3.75zM110.5 20.30h3.75v3.75h-3.75zM122 12.80h3.75v3.75h-3.75zM122 24.05h3.75v3.75h-3.75zM125.75 24.05h3.75v3.75h-3.75zM129.5 12.80h3.75v3.75h-3.75zM140 16.55h3.75v3.75h-3.75zM34 36.95h3.75v3.75h-3.75zM37.75 33.20h3.75v3.75h-3.75zM49 40.70h3.75v3.75h-3.75zM185.75 20.30h3.75v3.75h-3.75zM197 20.30h3.75v3.75h-3.75zM215.75 16.55h3.75v3.75h-3.75zM227 16.55h3.75v3.75h-3.75zM238.25 16.55h3.75v3.75h-3.75zM245.75 16.55h3.75v3.75h-3.75zM253.25 20.30h3.75v3.75h-3.75zM257 24.05h3.75v3.75h-3.75zM260.75 16.55h3.75v3.75h-3.75zM268.25 16.55h3.75v3.75h-3.75zM272 20.30h3.75v3.75h-3.75zM279.5 16.55h3.75v3.75h-3.75zM287 20.30h3.75v3.75h-3.75zM305.75 20.30h3.75v3.75h-3.75zM317 24.05h3.75v3.75h-3.75zM189.5 33.20h3.75v3.75h-3.75zM197 40.70h3.75v3.75h-3.75zM200.75 33.20h3.75v3.75h-3.75zM208.25 36.95h3.75v3.75h-3.75zM212 40.70h3.75v3.75h-3.75z"/><path fill="#a8a8a8" d="M4 20.30h3.75v3.75h-3.75zM7.75 16.55h3.75v3.75h-3.75zM19 16.55h3.75v3.75h-3.75zM19 20.30h3.75v3.75h-3.75zM19 24.05h3.75v3.75h-3.75zM22.75 24.05h3.75v3.75h-3.75zM37.75 24.05h3.75v3.75h-3.75zM41.5 12.80h3.75v3.75h-3.75zM52.75 12.80h3.75v3.75h-3.75zM52.75 16.55h3.75v3.75h-3.75zM60.25 12.80h3.75v3.75h-3.75zM60.25 20.30h3.75v3.75h-3.75zM64 20.30h3.75v3.75h-3.75zM79 16.55h3.75v3.75h-3.75zM79 24.05h3.75v3.75h-3.75zM82.75 16.55h3.75v3.75h-3.75zM103 20.30h3.75v3.75h-3.75zM106.75 16.55h3.75v3.75h-3.75zM106.75 20.30h3.75v3.75h-3.75zM110.5 16.55h3.75v3.75h-3.75zM140 20.30h3.75v3.75h-3.75zM147.5 20.30h3.75v3.75h-3.75zM151.25 20.30h3.75v3.75h-3.75zM56.5 36.95h3.75v3.75h-3.75zM185.75 16.55h3.75v3.75h-3.75zM212 16.55h3.75v3.75h-3.75zM212 20.30h3.75v3.75h-3.75zM215.75 20.30h3.75v3.75h-3.75zM215.75 24.05h3.75v3.75h-3.75zM219.5 24.05h3.75v3.75h-3.75zM223.25 12.80h3.75v3.75h-3.75zM234.5 16.55h3.75v3.75h-3.75zM234.5 20.30h3.75v3.75h-3.75zM238.25 20.30h3.75v3.75h-3.75zM249.5 16.55h3.75v3.75h-3.75zM257 16.55h3.75v3.75h-3.75zM272 16.55h3.75v3.75h-3.75zM275.75 20.30h3.75v3.75h-3.75zM287 12.80h3.75v3.75h-3.75zM294.5 20.30h3.75v3.75h-3.75zM298.25 24.05h3.75v3.75h-3.75zM302 16.55h3.75v3.75h-3.75zM302 24.05h3.75v3.75h-3.75zM305.75 16.55h3.75v3.75h-3.75zM182 40.70h3.75v3.75h-3.75zM193.25 33.20h3.75v3.75h-3.75zM197 36.95h3.75v3.75h-3.75zM204.5 33.20h3.75v3.75h-3.75zM204.5 36.95h3.75v3.75h-3.75zM208.25 33.20h3.75v3.75h-3.75zM208.25 40.70h3.75v3.75h-3.75z"/><path fill="#c9c9c9" d="M11.5 20.30h3.75v3.75h-3.75zM15.25 12.80h3.75v3.75h-3.75zM15.25 24.05h3.75v3.75h-3.75zM22.75 16.55h3.75v3.75h-3.75zM26.5 16.55h3.75v3.75h-3.75zM34 16.55h3.75v3.75h-3.75zM41.5 24.05h3.75v3.75h-3.75zM45.25 20.30h3.75v3.75h-3.75zM49 12.80h3.75v3.75h-3.75zM52.75 20.30h3.75v3.75h-3.75zM56.5 16.55h3.75v3.75h-3.75zM56.5 20.30h3.75v3.75h-3.75zM60.25 16.55h3.75v3.75h-3.75zM64 24.05h3.75v3.75h-3.75zM71.5 20.30h3.75v3.75h-3.75zM122 16.55h3.75v3.75h-3.75zM129.5 20.30h3.75v3.75h-3.75zM143.75 24.05h3.75v3.75h-3.75zM147.5 12.80h3.75v3.75h-3.75zM41.5 33.20h3.75v3.75h-3.75zM41.5 36.95h3.75v3.75h-3.75zM45.25 36.95h3.75v3.75h-3.75zM52.75 33.20h3.75v3.75h-3.75zM182 16.55h3.75v3.75h-3.75zM182 24.05h3.75v3.75h-3.75zM189.5 16.55h3.75v3.75h-3.75zM189.5 20.30h3.75v3.75h-3.75zM204.5 20.30h3.75v3.75h-3.75zM208.25 16.55h3.75v3.75h-3.75zM212 24.05h3.75v3.75h-3.75zM249.5 20.30h3.75v3.75h-3.75zM283.25 24.05h3.75v3.75h-3.75zM290.75 16.55h3.75v3.75h-3.75zM298.25 16.55h3.75v3.75h-3.75zM313.25 16.55h3.75v3.75h-3.75zM320.75 20.30h3.75v3.75h-3.75zM324.5 16.55h3.75v3.75h-3.75zM324.5 24.05h3.75v3.75h-3.75zM204.5 40.70h3.75v3.75h-3.75z"/><path fill="#e4e4e4" d="M11.5 16.55h3.75v3.75h-3.75zM22.75 20.30h3.75v3.75h-3.75zM26.5 20.30h3.75v3.75h-3.75zM30.25 16.55h3.75v3.75h-3.75zM34 20.30h3.75v3.75h-3.75zM49 16.55h3.75v3.75h-3.75zM56.5 12.80h3.75v3.75h-3.75zM67.75 16.55h3.75v3.75h-3.75zM71.5 16.55h3.75v3.75h-3.75zM79 20.30h3.75v3.75h-3.75zM103 16.55h3.75v3.75h-3.75zM114.25 20.30h3.75v3.75h-3.75zM125.75 20.30h3.75v3.75h-3.75zM129.5 16.55h3.75v3.75h-3.75zM147.5 24.05h3.75v3.75h-3.75zM15.25 36.95h3.75v3.75h-3.75zM52.75 40.70h3.75v3.75h-3.75zM182 20.30h3.75v3.75h-3.75zM208.25 20.30h3.75v3.75h-3.75zM234.5 12.80h3.75v3.75h-3.75zM249.5 12.80h3.75v3.75h-3.75zM253.25 16.55h3.75v3.75h-3.75zM257 20.30h3.75v3.75h-3.75zM260.75 20.30h3.75v3.75h-3.75zM264.5 24.05h3.75v3.75h-3.75zM309.5 12.80h3.75v3.75h-3.75zM309.5 16.55h3.75v3.75h-3.75zM309.5 20.30h3.75v3.75h-3.75zM317 16.55h3.75v3.75h-3.75zM328.25 20.30h3.75v3.75h-3.75zM185.75 33.20h3.75v3.75h-3.75zM189.5 36.95h3.75v3.75h-3.75zM189.5 40.70h3.75v3.75h-3.75zM212 33.20h3.75v3.75h-3.75zM212 36.95h3.75v3.75h-3.75z"/></svg><div class="c z" style="left:1040.0px">开门柜勿动<span style="font-size:14px">0</span><br>506</div><div class="c " style="left:1140.0px">4.02</div><div class="c " style="left:1202.0px">0.10</div><div class="c z" style="left:1264.0px">微信</div><div class="c " style="left:1327.0px;letter-spacing:0.13px">2025-11-10 16:<br>02:58</div><div class="c " style="left:1449.0px;letter-spacing:0.13px">2025-11-10 16:<br>03:29</div><div class="c g" style="left:1571.0px">分账成<br>功</div></div>
<div class="r " style="top:470.20px"><div class="c " style="left:-0.6px">8</div><div class="c " style="left:41.0px;letter-spacing:-0.5px">R25111016025<br>82115</div><div class="c " style="left:160.0px;letter-spacing:0.2px">OD788559065398<br>370304</div><div class="c " style="left:306.0px;letter-spacing:0.12px">42000029192025111089<br>73126184</div><div class="c " style="left:489.0px;letter-spacing:0.1px">300000094220251110992<br>49599349</div><svg style="left:690.0px;top:0" width="336" height="58.7" viewBox="0 0 336 58.7" shape-rendering="crispEdges"><rect width="336" height="58.7" fill="#fff"/><path fill="#5e5e5e" d="M22 16.55h3.75v3.75h-3.75zM33.25 24.05h3.75v3.75h-3.75zM68 24.05h3.75v3.75h-3.75zM75.5 16.55h3.75v3.75h-3.75zM90.5 16.55h3.75v3.75h-3.75zM101.75 24.05h3.75v3.75h-3.75zM116.75 12.80h3.75v3.75h-3.75zM19.5 33.20h3.75v3.75h-3.75zM260.75 16.55h3.75v3.75h-3.75zM302 20.30h3.75v3.75h-3.75z"/><path fill="#858585" d="M10.75 24.05h3.75v3.75h-3.75zM22 20.30h3.75v3.75h-3.75zM25.75 20.30h3.75v3.75h-3.75zM25.75 24.05h3.75v3.75h-3.75zM29.5 20.30h3.75v3.75h-3.75zM37 20.30h3.75v3.75h-3.75zM40.75 16.55h3.75v3.75h-3.75zM40.75 24.05h3.75v3.75h-3.75zM52 20.30h3.75v3.75h-3.75zM55.75 16.55h3.75v3.75h-3.75zM79.25 16.55h3.75v3.75h-3.75zM86.75 20.30h3.75v3.75h-3.75zM86.75 24.05h3.75v3.75h-3.75zM90.5 20.30h3.75v3.75h-3.75zM90.5 24.05h3.75v3.75h-3.75zM94.25 16.55h3.75v3.75h-3.75zM94.25 24.05h3.75v3.75h-3.75zM101.75 20.30h3.75v3.75h-3.75zM116.75 20.30h3.75v3.75h-3.75zM128 20.30h3.75v3.75h-3.75zM131.75 16.55h3.75v3.75h-3.75zM146.75 24.05h3.75v3.75h-3.75zM150.5 16.55h3.75v3.75h-3.75zM12 33.20h3.75v3.75h-3.75zM12 40.70h3.75v3.75h-3.75zM23.25 33.20h3.75v3.75h-3.75zM23.25 36.95h3.75v3.75h-3.75zM30.75 36.95h3.75v3.75h-3.75zM182 20.30h3.75v3.75h-3.75zM193.25 16.55h3.75v3.75h-3.75zM200.75 24.05h3.75v3.75h-3.75zM219.5 20.30h3.75v3.75h-3.75zM230.75 16.55h3.75v3.75h-3.75zM230.75 24.05h3.75v3.75h-3.75zM249.5 20.30h3.75v3.75h-3.75zM257 24.05h3.75v3.75h-3.75zM264.5 12.80h3.75v3.75h-3.75zM264.5 20.30h3.75v3.75h-3.75zM272 20.30h3.75v3.75h-3.75zM279.5 16.55h3.75v3.75h-3.75zM283.25 20.30h3.75v3.75h-3.75zM294.5 20.30h3.75v3.75h-3.75zM185.75 36.95h3.75v3.75h-3.75zM189.5 36.95h3.75v3.75h-3.75zM230.75 36.95h3.75v3.75h-3.75z"/><path fill="#a8a8a8" d="M14.5 16.55h3.75v3.75h-3.75zM25.75 16.55h3.75v3.75h-3.75zM29.5 24.05h3.75v3.75h-3.75zM33.25 20.30h3.75v3.75h-3.75zM37 16.55h3.75v3.75h-3.75zM37 24.05h3.75v3.75h-3.75zM52 16.55h3.75v3.75h-3.75zM59.5 24.05h3.75v3.75h-3.75zM68 16.55h3.75v3.75h-3.75zM71.75 16.55h3.75v3.75h-3.75zM83 16.55h3.75v3.75h-3.75zM83 24.05h3.75v3.75h-3.75zM101.75 16.55h3.75v3.75h-3.75zM105.5 20.30h3.75v3.75h-3.75zM128 12.80h3.75v3.75h-3.75zM131.75 20.30h3.75v3.75h-3.75zM135.5 16.55h3.75v3.75h-3.75zM143 16.55h3.75v3.75h-3.75zM150.5 24.05h3.75v3.75h-3.75zM15.75 36.95h3.75v3.75h-3.75zM19.5 36.95h3.75v3.75h-3.75zM23.25 40.70h3.75v3.75h-3.75zM27 36.95h3.75v3.75h-3.75zM34.5 36.95h3.75v3.75h-3.75zM42 36.95h3.75v3.75h-3.75zM185.75 12.80h3.75v3.75h-3.75zM185.75 16.55h3.75v3.75h-3.75zM185.75 20.30h3.75v3.75h-3.75zM189.5 12.80h3.75v3.75h-3.75zM197 12.80h3.75v3.75h-3.75zM200.75 16.55h3.75v3.75h-3.75zM227 20.30h3.75v3.75h-3.75zM234.5 20.30h3.75v3.75h-3.75zM238.25 16.55h3.75v3.75h-3.75zM245.75 20.30h3.75v3.75h-3.75zM253.25 12.80h3.75v3.75h-3.75zM257 16.55h3.75v3.75h-3.75zM272 16.55h3.75v3.75h-3.75zM275.75 16.55h3.75v3.75h-3.75zM309.5 16.55h3.75v3.75h-3.75zM309.5 24.05h3.75v3.75h-3.75zM208.25 36.95h3.75v3.75h-3.75zM219.5 40.70h3.75v3.75h-3.75zM223.25 40.70h3.75v3.75h-3.75z"/><path fill="#c9c9c9" d="M7 16.55h3.75v3.75h-3.75zM10.75 20.30h3.75v3.75h-3.75zM40.75 20.30h3.75v3.75h-3.75zM55.75 24.05h3.75v3.75h-3.75zM59.5 20.30h3.75v3.75h-3.75zM75.5 20.30h3.75v3.75h-3.75zM79.25 12.80h3.75v3.75h-3.75zM83 12.80h3.75v3.75h-3.75zM113 20.30h3.75v3.75h-3.75zM116.75 16.55h3.75v3.75h-3.75zM120.5 20.30h3.75v3.75h-3.75zM128 16.55h3.75v3.75h-3.75zM135.5 20.30h3.75v3.75h-3.75zM139.25 16.55h3.75v3.75h-3.75zM139.25 24.05h3.75v3.75h-3.75zM143 24.05h3.75v3.75h-3.75zM27 33.20h3.75v3.75h-3.75zM27 40.70h3.75v3.75h-3.75zM34.5 40.70h3.75v3.75h-3.75zM42 33.20h3.75v3.75h-3.75zM45.75 33.20h3.75v3.75h-3.75zM45.75 36.95h3.75v3.75h-3.75zM49.5 36.95h3.75v3.75h-3.75zM182 16.55h3.75v3.75h-3.75zM182 24.05h3.75v3.75h-3.75zM197 16.55h3.75v3.75h-3.75zM200.75 20.30h3.75v3.75h-3.75zM204.5 12.80h3.75v3.75h-3.75zM208.25 24.05h3.75v3.75h-3.75zM215.75 24.05h3.75v3.75h-3.75zM223.25 16.55h3.75v3.75h-3.75zM245.75 16.55h3.75v3.75h-3.75zM253.25 20.30h3.75v3.75h-3.75zM268.25 20.30h3.75v3.75h-3.75zM279.5 20.30h3.75v3.75h-3.75zM302 24.05h3.75v3.75h-3.75zM313.25 20.30h3.75v3.75h-3.75zM320.75 24.05h3.75v3.75h-3.75zM324.5 16.55h3.75v3.75h-3.75zM324.5 20.30h3.75v3.75h-3.75zM328.25 16.55h3.75v3.75h-3.75zM332 16.55h3.75v3.75h-3.75zM182 36.95h3.75v3.75h-3.75zM200.75 40.70h3.75v3.75h-3.75zM227 36.95h3.75v3.75h-3.75zM234.5 36.95h3.75v3.75h-3.75z"/><path fill="#e4e4e4" d="M10.75 16.55h3.75v3.75h-3.75zM14.5 20.30h3.75v3.75h-3.75zM18.25 12.80h3.75v3.75h-3.75zM18.25 16.55h3.75v3.75h-3.75zM25.75 12.80h3.75v3.75h-3.75zM40.75 12.80h3.75v3.75h-3.75zM79.25 20.30h3.75v3.75h-3.75zM94.25 20.30h3.75v3.75h-3.75zM98 12.80h3.75v3.75h-3.75zM105.5 24.05h3.75v3.75h-3.75zM109.25 20.30h3.75v3.75h-3.75zM113 16.55h3.75v3.75h-3.75zM116.75 24.05h3.75v3.75h-3.75zM143 20.30h3.75v3.75h-3.75zM146.75 20.30h3.75v3.75h-3.75zM30.75 40.70h3.75v3.75h-3.75zM38.25 40.70h3.75v3.75h-3.75zM42 40.70h3.75v3.75h-3.75zM49.5 33.20h3.75v3.75h-3.75zM49.5 40.70h3.75v3.75h-3.75zM57 40.70h3.75v3.75h-3.75zM189.5 20.30h3.75v3.75h-3.75zM212 20.30h3.75v3.75h-3.75zM215.75 20.30h3.75v3.75h-3.75zM230.75 20.30h3.75v3.75h-3.75zM242 16.55h3.75v3.75h-3.75zM245.75 24.05h3.75v3.75h-3.75zM249.5 12.80h3.75v3.75h-3.75zM253.25 24.05h3.75v3.75h-3.75zM257 20.30h3.75v3.75h-3.75zM268.25 24.05h3.75v3.75h-3.75zM298.25 16.55h3.75v3.75h-3.75zM298.25 20.30h3.75v3.75h-3.75zM305.75 16.55h3.75v3.75h-3.75zM332 20.30h3.75v3.75h-3.75zM185.75 33.20h3.75v3.75h-3.75zM189.5 40.70h3.75v3.75h-3.75zM200.75 33.20h3.75v3.75h-3.75z"/></svg><div class="c z" style="left:1040.0px">开门柜勿动<span style="font-size:14px">0</span><br>506</div><div class="c " style="left:1140.0px">4.02</div><div class="c " style="left:1202.0px">0.32</div><div class="c z" style="left:1264.0px">微信</div><div class="c " style="left:1327.0px;letter-spacing:0.13px">2025-11-10 16:<br>02:58</div><div class="c " style="left:1449.0px;letter-spacing:0.13px">2025-11-10 16:<br>03:30</div><div class="c g" style="left:1571.0px">分账成<br>功</div></div>
<div class="r o" style="top:528.90px"></div>
</div>
</div>

<!-- FOOTER -->
<div id="foot" class="abs">
  <div class="abs" style="left:17px;top:18px;font-size:16.600px;line-height:22px;color:#666;white-space:nowrap">© 2018 Copyright.</div>
  <div class="abs" style="left:1582px;top:18px;font-size:15.600px;line-height:22px;color:#7a7a7a;white-space:nowrap">返回顶部</div>
  <svg style="left:1649.500px;top:20.500px" width="9" height="17" viewBox="0 0 9 17" fill="#666"><path d="M4.500 0 8.300 4.600H5.400V16.600H3.600V4.600H.7z"/></svg>
  <div class="abs" style="left:425px;top:66px;width:600px;height:20px;border-radius:10px;background:rgba(0,0,0,.2);box-shadow:0 0 34px 12px rgba(0,0,0,.2)"></div>
</div>

<!-- annotation -->
<div class="abs" style="left:1275.700px;top:399px;width:293.800px;height:560px;border:8.600px solid #cc3322;border-radius:4px;z-index:5"></div>

<div class="abs" style="left:0;top:1005px;width:9px;height:9px;z-index:6;background:radial-gradient(circle at 100% 0,rgba(10,24,12,0) 8.300px,#0b1a0d 9.300px)"></div>

<!-- SCROLLBAR -->
<div id="sbar" class="abs"></div>
<div id="sthumb" class="abs"></div>
</body>
</html>
